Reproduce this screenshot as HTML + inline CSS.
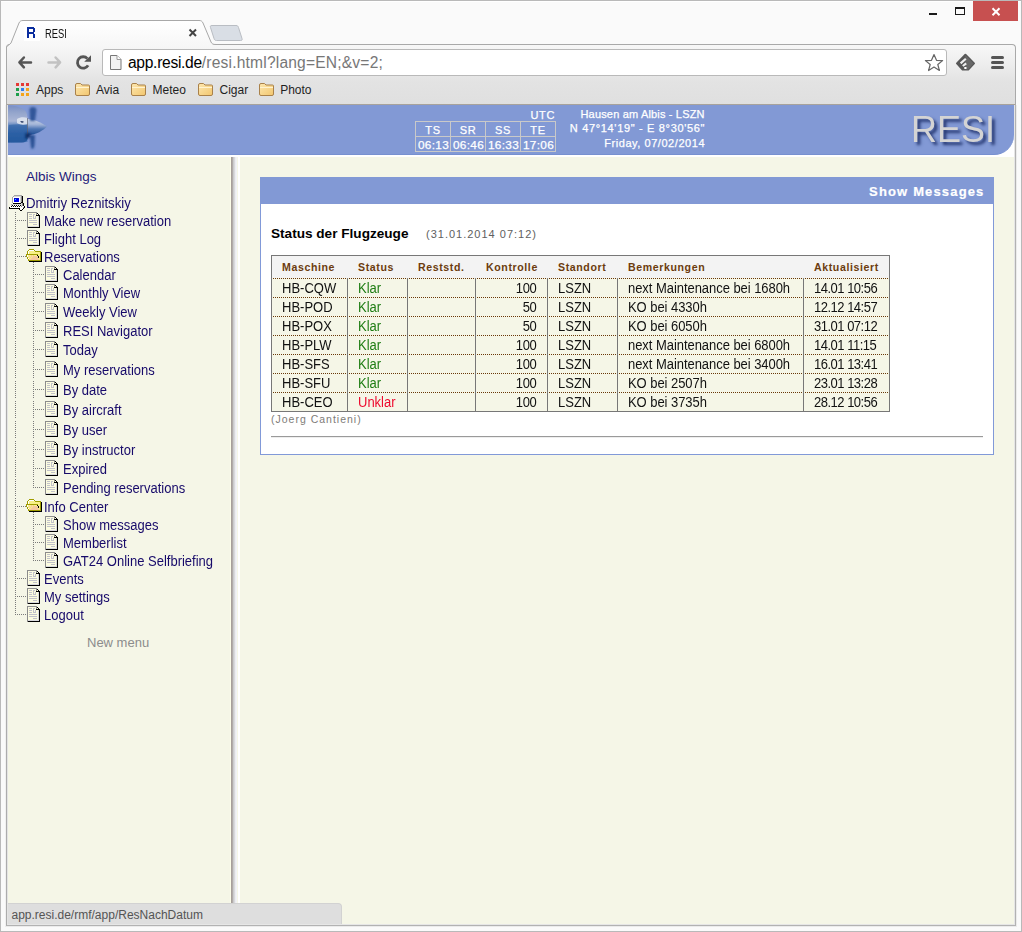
<!DOCTYPE html>
<html><head><meta charset="utf-8">
<style>
*{margin:0;padding:0;box-sizing:border-box}
html,body{width:1022px;height:932px;overflow:hidden;background:#f8f8f8;font-family:"Liberation Sans",sans-serif}
.a{position:absolute}
.t{position:absolute;white-space:nowrap;line-height:1}
.sy{transform:scaleY(1.07);transform-origin:0 11px}
</style></head><body>
<!-- window frame -->
<div class="a" style="left:0;top:0;width:1022px;height:932px;border:1px solid #b9b9b9;background:#fafafa"></div>
<div class="a" style="left:1px;top:1px;width:1020px;height:1px;background:#fff"></div>
<!-- window controls -->
<div class="a" style="left:929px;top:13px;width:8px;height:2px;background:#1a1a1a"></div>
<div class="a" style="left:955px;top:7px;width:10px;height:8px;border:1px solid #1a1a1a;border-top-width:2px"></div>
<div class="a" style="left:973px;top:1px;width:45px;height:20px;background:#c75050"></div>
<svg class="a" style="left:973px;top:1px" width="45" height="20"><path d="M19.5 7.3 L26.5 14.2 M26.5 7.3 L19.5 14.2" stroke="#fff" stroke-width="2"/></svg>

<!-- toolbar + bookmarks -->
<div class="a" style="left:6px;top:44px;width:1010px;height:61px;border:1px solid #a9a9a9;border-bottom:none;border-radius:4px 4px 0 0;background:linear-gradient(#f7f7f7 0px,#ededed 20px,#e3e3e3 36px,#dfdfdf 61px)"></div>

<!-- tab -->
<svg class="a" style="left:0;top:14px" width="260" height="34">
 <defs><linearGradient id="tg" x1="0" y1="0" x2="0" y2="1"><stop offset="0" stop-color="#ffffff"/><stop offset="1" stop-color="#f6f6f6"/></linearGradient></defs>
 <path d="M6.5 34 L6.5 33 C8 31 10 30.5 11 29 L19 9 C20 7 21 6.5 23 6.5 L199 6.5 C201 6.5 202 7 203 9 L211 28 C212 30 213 30.5 216 30.5 L260 30.5 L260 34 Z" fill="url(#tg)" stroke="none"/>
 <path d="M6.5 34 L6.5 33 C8 31 10 30.5 11 29 L19 9 C20 7 21 6.5 23 6.5 L199 6.5 C201 6.5 202 7 203 9 L211 28 C212 30 213 30.5 216 30.5 L260 30.5" fill="none" stroke="#a8a8a8" stroke-width="1"/>
 <path d="M212 11.5 L236 11.5 C237.5 11.5 238 12 238.5 13.5 L242 24.5 C242.5 26 242 26.5 240.5 26.5 L216.5 26.5 C215 26.5 214.5 26 214 24.5 L210.5 13.5 C210 12 210.5 11.5 212 11.5 Z" fill="#d9dee5" stroke="#b9bdc3" stroke-width="1"/>
</svg>
<div class="a" style="left:24px;top:25px;width:16px;height:16px;background:#fff"></div>
<svg class="a" style="left:27px;top:27px" width="9" height="11"><path d="M0 0 H7 V1 H8 V11 H6 V7 H2 V11 H0 Z M2 2 V5 H6 V2 Z" fill="#0a2d9e" fill-rule="evenodd"/><rect x="7" y="5" width="1" height="2" fill="#fff"/></svg>
<div class="t" style="left:44.5px;top:26.5px;font:12.5px 'Liberation Sans';color:#111;transform:scaleX(0.75);transform-origin:0 0">RESI</div>
<svg class="a" style="left:188px;top:28px" width="10" height="10"><path d="M1.5 1.5 L8 8 M8 1.5 L1.5 8" stroke="#444" stroke-width="2"/></svg>

<!-- nav icons -->
<svg class="a" style="left:16px;top:54px" width="20" height="17"><path d="M7.9 3.5 L3.4 8.4 L7.9 13.3 M4 8.4 L15 8.4" stroke="#555" stroke-width="2.5" fill="none" stroke-linecap="round" stroke-linejoin="round"/></svg>
<svg class="a" style="left:45px;top:54px" width="20" height="17"><path d="M10.6 3.5 L15.1 8.4 L10.6 13.3 M14.5 8.4 L3.5 8.4" stroke="#c2c2c2" stroke-width="2.5" fill="none" stroke-linecap="round" stroke-linejoin="round"/></svg>
<svg class="a" style="left:74px;top:53px" width="20" height="19"><path d="M14.1 12.35 A5.7 5.7 0 1 1 13.4 5.6" stroke="#555" stroke-width="2.8" fill="none"/><path d="M17 2.2 L17 8.8 L10.2 8.8 Z" fill="#555"/></svg>

<!-- omnibox -->
<div class="a" style="left:102px;top:49px;width:845px;height:27px;border:1px solid #b9b9b9;border-radius:3px;background:#fff"></div>
<svg class="a" style="left:109px;top:54px" width="14" height="17"><path d="M1.5 1.5 L8 1.5 L12 5.5 L12 15.5 L1.5 15.5 Z" fill="#f2f2f2" stroke="#777" stroke-width="1"/><path d="M8 1.5 L8 5.5 L12 5.5" fill="#fff" stroke="#999" stroke-width="1"/></svg>
<div class="t" style="left:128px;top:54px;font:15.6px 'Liberation Sans';color:#000;letter-spacing:-0.3px">app.resi.de<span style="color:#777;letter-spacing:0.18px">/resi.html?lang=EN;&amp;v=2;</span></div>
<svg class="a" style="left:922.5px;top:52px" width="22" height="22"><path d="M11 2.5 L13.5 8.3 L19.6 8.6 L14.8 12.5 L16.4 18.5 L11 15.1 L5.6 18.5 L7.2 12.5 L2.4 8.6 L8.5 8.3 Z" fill="#fff" stroke="#666" stroke-width="1.2" stroke-linejoin="round"/></svg>
<svg class="a" style="left:954px;top:52px" width="22" height="22"><path d="M11.4 2.8 L20 11.4 L14.2 17.5 L8.6 17.5 L3 11.4 Z" fill="#575757" stroke="#575757" stroke-width="2" stroke-linejoin="round"/><path d="M11.4 3 L19.5 11.4 L14 17.5 L11.4 17.5 Z" fill="#686868"/><path d="M6.6 11.4 L11.8 6.8 M8.8 14 L12.2 11.3" stroke="#eee" stroke-width="2.2" stroke-linecap="butt"/><rect x="10.3" y="15" width="2.2" height="2" fill="#fff"/></svg>
<div class="a" style="left:991px;top:56px;width:13px;height:3px;background:#555;border-radius:1.5px"></div>
<div class="a" style="left:991px;top:61px;width:13px;height:3px;background:#555;border-radius:1.5px"></div>
<div class="a" style="left:991px;top:66px;width:13px;height:3px;background:#555;border-radius:1.5px"></div>


<div class="a" style="left:16px;top:83px;width:3px;height:3px;background:#e53935"></div>
<div class="a" style="left:21px;top:83px;width:3px;height:3px;background:#e53935"></div>
<div class="a" style="left:26px;top:83px;width:3px;height:3px;background:#e53935"></div>
<div class="a" style="left:16px;top:88px;width:3px;height:3px;background:#1e9e4a"></div>
<div class="a" style="left:21px;top:88px;width:3px;height:3px;background:#2f7ff0"></div>
<div class="a" style="left:26px;top:88px;width:3px;height:3px;background:#f4a41a"></div>
<div class="a" style="left:16px;top:93px;width:3px;height:3px;background:#1e9e4a"></div>
<div class="a" style="left:21px;top:93px;width:3px;height:3px;background:#f4a41a"></div>
<div class="a" style="left:26px;top:93px;width:3px;height:3px;background:#f4a41a"></div>
<div class="t" style="left:36px;top:83.4px;font:12px 'Liberation Sans';color:#1f1f1f">Apps</div>
<svg class="a" style="left:75px;top:83px" width="16" height="13"><defs><linearGradient id="fg" x1="0" y1="0" x2="1" y2="1"><stop offset="0" stop-color="#fde7b0"/><stop offset="1" stop-color="#f2c66e"/></linearGradient></defs><path d="M0.5 2 Q0.5 0.5 2 0.5 L5.5 0.5 L7 2 L13.5 2 Q14.5 2 14.5 3 L14.5 11 Q14.5 12.5 13 12.5 L2 12.5 Q0.5 12.5 0.5 11 Z" fill="url(#fg)" stroke="#a9814a"/><path d="M1 4.5 L14 4.5" stroke="#fff3d0" stroke-width="1"/></svg>
<div class="t" style="left:96px;top:83.4px;font:12px 'Liberation Sans';color:#1f1f1f">Avia</div>
<svg class="a" style="left:131px;top:83px" width="16" height="13"><defs><linearGradient id="fg" x1="0" y1="0" x2="1" y2="1"><stop offset="0" stop-color="#fde7b0"/><stop offset="1" stop-color="#f2c66e"/></linearGradient></defs><path d="M0.5 2 Q0.5 0.5 2 0.5 L5.5 0.5 L7 2 L13.5 2 Q14.5 2 14.5 3 L14.5 11 Q14.5 12.5 13 12.5 L2 12.5 Q0.5 12.5 0.5 11 Z" fill="url(#fg)" stroke="#a9814a"/><path d="M1 4.5 L14 4.5" stroke="#fff3d0" stroke-width="1"/></svg>
<div class="t" style="left:152.6px;top:83.4px;font:12px 'Liberation Sans';color:#1f1f1f">Meteo</div>
<svg class="a" style="left:198px;top:83px" width="16" height="13"><defs><linearGradient id="fg" x1="0" y1="0" x2="1" y2="1"><stop offset="0" stop-color="#fde7b0"/><stop offset="1" stop-color="#f2c66e"/></linearGradient></defs><path d="M0.5 2 Q0.5 0.5 2 0.5 L5.5 0.5 L7 2 L13.5 2 Q14.5 2 14.5 3 L14.5 11 Q14.5 12.5 13 12.5 L2 12.5 Q0.5 12.5 0.5 11 Z" fill="url(#fg)" stroke="#a9814a"/><path d="M1 4.5 L14 4.5" stroke="#fff3d0" stroke-width="1"/></svg>
<div class="t" style="left:219.5px;top:83.4px;font:12px 'Liberation Sans';color:#1f1f1f">Cigar</div>
<svg class="a" style="left:259px;top:83px" width="16" height="13"><defs><linearGradient id="fg" x1="0" y1="0" x2="1" y2="1"><stop offset="0" stop-color="#fde7b0"/><stop offset="1" stop-color="#f2c66e"/></linearGradient></defs><path d="M0.5 2 Q0.5 0.5 2 0.5 L5.5 0.5 L7 2 L13.5 2 Q14.5 2 14.5 3 L14.5 11 Q14.5 12.5 13 12.5 L2 12.5 Q0.5 12.5 0.5 11 Z" fill="url(#fg)" stroke="#a9814a"/><path d="M1 4.5 L14 4.5" stroke="#fff3d0" stroke-width="1"/></svg>
<div class="t" style="left:280.2px;top:83.4px;font:12px 'Liberation Sans';color:#1f1f1f">Photo</div>
<div class="a" style="left:6px;top:104px;width:1010px;height:822px;border:1px solid #b2b2b2;border-left-color:#acacac;border-top-color:#a7a29c;background:#f5f6e7"></div>
<div class="a" style="left:7px;top:105px;width:1px;height:820px;background:#e4e4e4"></div>
<div class="a" style="left:1014px;top:105px;width:1px;height:820px;background:#e6e6e6"></div>
<div class="a" style="left:7px;top:924px;width:1008px;height:1px;background:#e6e6e6"></div>
<div class="a" style="left:1016px;top:105px;width:1px;height:822px;background:#ebebeb"></div>
<div class="a" style="left:5px;top:105px;width:1px;height:822px;background:#f0f0f0"></div>
<div class="a" style="left:5px;top:926px;width:1012px;height:1px;background:#ebebeb"></div>
<div class="a" style="left:8px;top:105px;width:1006px;height:52px;background:#fff"></div>
<div class="a" style="left:8px;top:105px;width:1006px;height:50px;background:#8299d5;border-bottom:1px solid #7790d0;border-bottom-right-radius:20px"></div>
<svg class="a" style="left:8px;top:105px" width="45" height="48">
<defs>
<linearGradient id="fus" x1="0" y1="0" x2="0" y2="1"><stop offset="0" stop-color="#7a8fc4"/><stop offset="0.2" stop-color="#95a6cc"/><stop offset="0.42" stop-color="#aab6d6"/><stop offset="0.55" stop-color="#5a82bc"/><stop offset="0.75" stop-color="#2d62a6"/><stop offset="1" stop-color="#1f5298"/></linearGradient>
<linearGradient id="spn" x1="0" y1="0" x2="0" y2="1"><stop offset="0" stop-color="#d0d8e8"/><stop offset="0.35" stop-color="#9fb2d6"/><stop offset="0.6" stop-color="#4f76b4"/><stop offset="1" stop-color="#1d4a90"/></linearGradient>
<filter id="bl" x="-50%" y="-20%" width="200%" height="140%"><feGaussianBlur stdDeviation="0.8"/></filter>
<filter id="bl2"><feGaussianBlur stdDeviation="0.45"/></filter>
</defs>
<g filter="url(#bl2)">
<path d="M0 0.5 C8 0.5 14 2.5 17.5 6 C19 8 19.5 12 19.5 14 L19.5 34 C19 36 17 37.5 14 37.5 L0 37.5 Z" fill="url(#fus)"/>
<path d="M1 20 C6 19 12 19 19 19.5 L19.5 37 L0 37.5 Z" fill="#2a5ea4" opacity="0.55"/>
<path d="M19 14 C25 13.5 32 17 39 21.5 C35 25.5 29 29.5 19 30.5 Z" fill="url(#spn)"/>
<path d="M9 14 C12 12 16 12 20 13 L20 19 C16 20 12 20 9 18 Z" fill="#dfe4ee" opacity="0.9"/>
<path d="M12 16.5 C13 15.5 15 16 16 17 L14 18 Z" fill="#3a4a70"/>
<path d="M19 13 L20 13 L20 31 L19 31 Z" fill="#5a6070" opacity="0.7"/>
</g>
<g filter="url(#bl)">
<path d="M21.5 4 C23 1 28.5 1.5 28.5 5 L27 16 L22 16 Z" fill="#33579a"/>
<path d="M21.5 30 L27 30 L26.5 40 C26 44.5 23.5 45 23 42 Z" fill="#2b5194"/>
<path d="M17.5 28 L23 29 L21 33 L17.5 34 Z" fill="#0c2a64"/>
</g>
</svg>
<div class="t" style="left:911px;top:109px;font:36px 'Liberation Sans';color:#d4d4d4;text-shadow:3px 3px 3px #23356f;transform:scaleY(1.05);transform-origin:0 30px">RESI</div>
<div class="t" style="right:317.33px;top:108px;font:11px 'Liberation Sans';letter-spacing:0.17px;color:#fff;-webkit-text-stroke:0.25px #fff;text-align:right">Hausen am Albis - LSZN</div>
<div class="t" style="right:316.83px;top:122px;font:11px 'Liberation Sans';letter-spacing:0.67px;color:#fff;-webkit-text-stroke:0.25px #fff;text-align:right">N 47°14'19&quot; - E 8°30'56&quot;</div>
<div class="t" style="right:316.95px;top:136.5px;font:11px 'Liberation Sans';letter-spacing:0.55px;color:#fff;-webkit-text-stroke:0.25px #fff;text-align:right">Friday, 07/02/2014</div>
<div class="t" style="right:467px;top:108.5px;font:11px 'Liberation Sans';letter-spacing:0.6px;color:#fff;-webkit-text-stroke:0.25px #fff">UTC</div>
<div class="a" style="left:415px;top:121px;width:141px;height:31px;border:1px solid #c9c9c9"></div>
<div class="a" style="left:415px;top:136px;width:141px;height:1px;background:#c9c9c9"></div>
<div class="a" style="left:450px;top:121px;width:1px;height:31px;background:#c9c9c9"></div>
<div class="a" style="left:485px;top:121px;width:1px;height:31px;background:#c9c9c9"></div>
<div class="a" style="left:520px;top:121px;width:1px;height:31px;background:#c9c9c9"></div>
<div class="t" style="left:416px;width:34px;text-align:center;top:123.5px;font:11px 'Liberation Sans';letter-spacing:0.6px;color:#fff;-webkit-text-stroke:0.25px #fff">TS</div>
<div class="t" style="left:416px;width:35px;text-align:center;top:137.5px;font:11.8px 'Liberation Sans';letter-spacing:0.3px;color:#fff;-webkit-text-stroke:0.25px #fff">06:13</div>
<div class="t" style="left:451px;width:34px;text-align:center;top:123.5px;font:11px 'Liberation Sans';letter-spacing:0.6px;color:#fff;-webkit-text-stroke:0.25px #fff">SR</div>
<div class="t" style="left:451px;width:35px;text-align:center;top:137.5px;font:11.8px 'Liberation Sans';letter-spacing:0.3px;color:#fff;-webkit-text-stroke:0.25px #fff">06:46</div>
<div class="t" style="left:486px;width:34px;text-align:center;top:123.5px;font:11px 'Liberation Sans';letter-spacing:0.6px;color:#fff;-webkit-text-stroke:0.25px #fff">SS</div>
<div class="t" style="left:486px;width:35px;text-align:center;top:137.5px;font:11.8px 'Liberation Sans';letter-spacing:0.3px;color:#fff;-webkit-text-stroke:0.25px #fff">16:33</div>
<div class="t" style="left:521px;width:34px;text-align:center;top:123.5px;font:11px 'Liberation Sans';letter-spacing:0.6px;color:#fff;-webkit-text-stroke:0.25px #fff">TE</div>
<div class="t" style="left:521px;width:35px;text-align:center;top:137.5px;font:11.8px 'Liberation Sans';letter-spacing:0.3px;color:#fff;-webkit-text-stroke:0.25px #fff">17:06</div>
<div class="a" style="left:230px;top:157px;width:1px;height:746px;background:#fcfde9"></div>
<div class="a" style="left:231px;top:157px;width:1px;height:746px;background:#a79f9b"></div>
<div class="a" style="left:232px;top:157px;width:1px;height:746px;background:#b1aca9"></div>
<div class="a" style="left:233px;top:157px;width:1px;height:746px;background:#cbcbcd"></div>
<div class="a" style="left:234px;top:157px;width:1px;height:746px;background:#d9d9dc"></div>
<div class="a" style="left:235px;top:157px;width:1px;height:746px;background:#ecedf0"></div>
<div class="a" style="left:236px;top:157px;width:1px;height:746px;background:#f2f3f6"></div>
<div class="a" style="left:238px;top:157px;width:1px;height:746px;background:#ffffff"></div>
<div class="a" style="left:239px;top:157px;width:1px;height:746px;background:#ffffff"></div>
<div class="t" style="left:26px;top:168.5px;font:13.5px 'Liberation Sans';color:#1f1a7a">Albis Wings</div>
<svg class="a" style="left:8px;top:194px" width="18" height="18" shape-rendering="crispEdges"><rect x="6" y="1" width="8" height="1" fill="#a4a4a4"/><rect x="5" y="2" width="1" height="1" fill="#a4a4a4"/><rect x="6" y="2" width="7" height="1" fill="#d6d6d6"/><rect x="13" y="2" width="1" height="1" fill="#8c8c8c"/><rect x="14" y="2" width="1" height="1" fill="#000000"/><rect x="4" y="3" width="1" height="1" fill="#a4a4a4"/><rect x="5" y="3" width="7" height="1" fill="#ffffff"/><rect x="12" y="3" width="1" height="1" fill="#d6d6d6"/><rect x="13" y="3" width="1" height="1" fill="#8c8c8c"/><rect x="14" y="3" width="1" height="1" fill="#000000"/><rect x="4" y="4" width="1" height="1" fill="#a4a4a4"/><rect x="5" y="4" width="1" height="1" fill="#ffffff"/><rect x="6" y="4" width="5" height="1" fill="#0808c0"/><rect x="11" y="4" width="1" height="1" fill="#ffffff"/><rect x="12" y="4" width="1" height="1" fill="#d6d6d6"/><rect x="13" y="4" width="1" height="1" fill="#8c8c8c"/><rect x="14" y="4" width="1" height="1" fill="#000000"/><rect x="4" y="5" width="1" height="1" fill="#a4a4a4"/><rect x="5" y="5" width="1" height="1" fill="#ffffff"/><rect x="6" y="5" width="1" height="1" fill="#0000f4"/><rect x="7" y="5" width="1" height="1" fill="#10e8ff"/><rect x="8" y="5" width="3" height="1" fill="#0000f4"/><rect x="11" y="5" width="1" height="1" fill="#ffffff"/><rect x="12" y="5" width="1" height="1" fill="#d6d6d6"/><rect x="13" y="5" width="1" height="1" fill="#8c8c8c"/><rect x="14" y="5" width="1" height="1" fill="#000000"/><rect x="4" y="6" width="1" height="1" fill="#a4a4a4"/><rect x="5" y="6" width="1" height="1" fill="#ffffff"/><rect x="6" y="6" width="5" height="1" fill="#0000f4"/><rect x="11" y="6" width="1" height="1" fill="#ffffff"/><rect x="12" y="6" width="1" height="1" fill="#d6d6d6"/><rect x="13" y="6" width="1" height="1" fill="#8c8c8c"/><rect x="14" y="6" width="1" height="1" fill="#000000"/><rect x="4" y="7" width="1" height="1" fill="#a4a4a4"/><rect x="5" y="7" width="1" height="1" fill="#ffffff"/><rect x="6" y="7" width="5" height="1" fill="#0000f4"/><rect x="11" y="7" width="1" height="1" fill="#ffffff"/><rect x="12" y="7" width="1" height="1" fill="#d6d6d6"/><rect x="13" y="7" width="1" height="1" fill="#8c8c8c"/><rect x="14" y="7" width="1" height="1" fill="#000000"/><rect x="4" y="8" width="1" height="1" fill="#a4a4a4"/><rect x="5" y="8" width="7" height="1" fill="#ffffff"/><rect x="12" y="8" width="1" height="1" fill="#d6d6d6"/><rect x="13" y="8" width="2" height="1" fill="#000000"/><rect x="5" y="9" width="8" height="1" fill="#000000"/><rect x="13" y="9" width="1" height="1" fill="#d6d6d6"/><rect x="14" y="9" width="1" height="1" fill="#8c8c8c"/><rect x="15" y="9" width="1" height="1" fill="#000000"/><rect x="3" y="10" width="1" height="1" fill="#a4a4a4"/><rect x="4" y="10" width="10" height="1" fill="#d6d6d6"/><rect x="14" y="10" width="1" height="1" fill="#8c8c8c"/><rect x="15" y="10" width="1" height="1" fill="#000000"/><rect x="3" y="11" width="1" height="1" fill="#d6d6d6"/><rect x="4" y="11" width="1" height="1" fill="#000000"/><rect x="5" y="11" width="1" height="1" fill="#ffffff"/><rect x="6" y="11" width="1" height="1" fill="#000000"/><rect x="7" y="11" width="1" height="1" fill="#ffffff"/><rect x="8" y="11" width="1" height="1" fill="#000000"/><rect x="9" y="11" width="1" height="1" fill="#ffffff"/><rect x="10" y="11" width="1" height="1" fill="#000000"/><rect x="11" y="11" width="1" height="1" fill="#ffffff"/><rect x="12" y="11" width="1" height="1" fill="#000000"/><rect x="13" y="11" width="1" height="1" fill="#d6d6d6"/><rect x="14" y="11" width="1" height="1" fill="#8c8c8c"/><rect x="15" y="11" width="1" height="1" fill="#000000"/><rect x="2" y="12" width="1" height="1" fill="#ffffff"/><rect x="3" y="12" width="1" height="1" fill="#000000"/><rect x="4" y="12" width="1" height="1" fill="#ffffff"/><rect x="5" y="12" width="1" height="1" fill="#000000"/><rect x="6" y="12" width="1" height="1" fill="#ffffff"/><rect x="7" y="12" width="1" height="1" fill="#000000"/><rect x="8" y="12" width="1" height="1" fill="#ffffff"/><rect x="9" y="12" width="1" height="1" fill="#000000"/><rect x="10" y="12" width="1" height="1" fill="#ffffff"/><rect x="11" y="12" width="1" height="1" fill="#000000"/><rect x="12" y="12" width="1" height="1" fill="#ffffff"/><rect x="13" y="12" width="1" height="1" fill="#8c8c8c"/><rect x="14" y="12" width="2" height="1" fill="#ffffff"/><rect x="16" y="12" width="1" height="1" fill="#000000"/><rect x="1" y="13" width="1" height="1" fill="#000000"/><rect x="2" y="13" width="13" height="1" fill="#ffffff"/><rect x="15" y="13" width="1" height="1" fill="#8c8c8c"/><rect x="16" y="13" width="1" height="1" fill="#000000"/><rect x="1" y="14" width="11" height="1" fill="#000000"/><rect x="12" y="14" width="3" height="1" fill="#ffffff"/><rect x="15" y="14" width="1" height="1" fill="#000000"/><rect x="11" y="15" width="1" height="1" fill="#000000"/><rect x="12" y="15" width="2" height="1" fill="#ffffff"/><rect x="14" y="15" width="1" height="1" fill="#000000"/><rect x="12" y="16" width="2" height="1" fill="#000000"/></svg>
<div class="t sy" style="left:26px;top:196px;font:13.2px 'Liberation Sans';color:#170a6a">Dmitriy Reznitskiy</div>
<div class="a" style="left:15px;top:212px;width:1px;height:18px;background:repeating-linear-gradient(#7a7a7a 0 1px,transparent 1px 2px)"></div>
<div class="a" style="left:15px;top:230px;width:1px;height:18px;background:repeating-linear-gradient(#7a7a7a 0 1px,transparent 1px 2px)"></div>
<div class="a" style="left:15px;top:248px;width:1px;height:18px;background:repeating-linear-gradient(#7a7a7a 0 1px,transparent 1px 2px)"></div>
<div class="a" style="left:33px;top:262px;width:1px;height:4px;background:repeating-linear-gradient(#7a7a7a 0 1px,transparent 1px 2px)"></div>
<div class="a" style="left:15px;top:266px;width:1px;height:18px;background:repeating-linear-gradient(#7a7a7a 0 1px,transparent 1px 2px)"></div>
<div class="a" style="left:33px;top:266px;width:1px;height:18px;background:repeating-linear-gradient(#7a7a7a 0 1px,transparent 1px 2px)"></div>
<div class="a" style="left:15px;top:284px;width:1px;height:18px;background:repeating-linear-gradient(#7a7a7a 0 1px,transparent 1px 2px)"></div>
<div class="a" style="left:33px;top:284px;width:1px;height:18px;background:repeating-linear-gradient(#7a7a7a 0 1px,transparent 1px 2px)"></div>
<div class="a" style="left:15px;top:303px;width:1px;height:18px;background:repeating-linear-gradient(#7a7a7a 0 1px,transparent 1px 2px)"></div>
<div class="a" style="left:33px;top:303px;width:1px;height:18px;background:repeating-linear-gradient(#7a7a7a 0 1px,transparent 1px 2px)"></div>
<div class="a" style="left:15px;top:322px;width:1px;height:18px;background:repeating-linear-gradient(#7a7a7a 0 1px,transparent 1px 2px)"></div>
<div class="a" style="left:33px;top:322px;width:1px;height:18px;background:repeating-linear-gradient(#7a7a7a 0 1px,transparent 1px 2px)"></div>
<div class="a" style="left:15px;top:341px;width:1px;height:18px;background:repeating-linear-gradient(#7a7a7a 0 1px,transparent 1px 2px)"></div>
<div class="a" style="left:33px;top:341px;width:1px;height:18px;background:repeating-linear-gradient(#7a7a7a 0 1px,transparent 1px 2px)"></div>
<div class="a" style="left:15px;top:361px;width:1px;height:18px;background:repeating-linear-gradient(#7a7a7a 0 1px,transparent 1px 2px)"></div>
<div class="a" style="left:33px;top:361px;width:1px;height:18px;background:repeating-linear-gradient(#7a7a7a 0 1px,transparent 1px 2px)"></div>
<div class="a" style="left:15px;top:381px;width:1px;height:18px;background:repeating-linear-gradient(#7a7a7a 0 1px,transparent 1px 2px)"></div>
<div class="a" style="left:33px;top:381px;width:1px;height:18px;background:repeating-linear-gradient(#7a7a7a 0 1px,transparent 1px 2px)"></div>
<div class="a" style="left:15px;top:401px;width:1px;height:18px;background:repeating-linear-gradient(#7a7a7a 0 1px,transparent 1px 2px)"></div>
<div class="a" style="left:33px;top:401px;width:1px;height:18px;background:repeating-linear-gradient(#7a7a7a 0 1px,transparent 1px 2px)"></div>
<div class="a" style="left:15px;top:421px;width:1px;height:18px;background:repeating-linear-gradient(#7a7a7a 0 1px,transparent 1px 2px)"></div>
<div class="a" style="left:33px;top:421px;width:1px;height:18px;background:repeating-linear-gradient(#7a7a7a 0 1px,transparent 1px 2px)"></div>
<div class="a" style="left:15px;top:441px;width:1px;height:18px;background:repeating-linear-gradient(#7a7a7a 0 1px,transparent 1px 2px)"></div>
<div class="a" style="left:33px;top:441px;width:1px;height:18px;background:repeating-linear-gradient(#7a7a7a 0 1px,transparent 1px 2px)"></div>
<div class="a" style="left:15px;top:460px;width:1px;height:18px;background:repeating-linear-gradient(#7a7a7a 0 1px,transparent 1px 2px)"></div>
<div class="a" style="left:33px;top:460px;width:1px;height:18px;background:repeating-linear-gradient(#7a7a7a 0 1px,transparent 1px 2px)"></div>
<div class="a" style="left:15px;top:479px;width:1px;height:18px;background:repeating-linear-gradient(#7a7a7a 0 1px,transparent 1px 2px)"></div>
<div class="a" style="left:33px;top:479px;width:1px;height:9px;background:repeating-linear-gradient(#7a7a7a 0 1px,transparent 1px 2px)"></div>
<div class="a" style="left:15px;top:498px;width:1px;height:18px;background:repeating-linear-gradient(#7a7a7a 0 1px,transparent 1px 2px)"></div>
<div class="a" style="left:33px;top:512px;width:1px;height:4px;background:repeating-linear-gradient(#7a7a7a 0 1px,transparent 1px 2px)"></div>
<div class="a" style="left:15px;top:516px;width:1px;height:18px;background:repeating-linear-gradient(#7a7a7a 0 1px,transparent 1px 2px)"></div>
<div class="a" style="left:33px;top:516px;width:1px;height:18px;background:repeating-linear-gradient(#7a7a7a 0 1px,transparent 1px 2px)"></div>
<div class="a" style="left:15px;top:534px;width:1px;height:18px;background:repeating-linear-gradient(#7a7a7a 0 1px,transparent 1px 2px)"></div>
<div class="a" style="left:33px;top:534px;width:1px;height:18px;background:repeating-linear-gradient(#7a7a7a 0 1px,transparent 1px 2px)"></div>
<div class="a" style="left:15px;top:552px;width:1px;height:18px;background:repeating-linear-gradient(#7a7a7a 0 1px,transparent 1px 2px)"></div>
<div class="a" style="left:33px;top:552px;width:1px;height:9px;background:repeating-linear-gradient(#7a7a7a 0 1px,transparent 1px 2px)"></div>
<div class="a" style="left:15px;top:570px;width:1px;height:18px;background:repeating-linear-gradient(#7a7a7a 0 1px,transparent 1px 2px)"></div>
<div class="a" style="left:15px;top:588px;width:1px;height:18px;background:repeating-linear-gradient(#7a7a7a 0 1px,transparent 1px 2px)"></div>
<div class="a" style="left:15px;top:606px;width:1px;height:9px;background:repeating-linear-gradient(#7a7a7a 0 1px,transparent 1px 2px)"></div>
<div class="a" style="left:15px;top:220px;width:12px;height:1px;background:repeating-linear-gradient(90deg,#7a7a7a 0 1px,transparent 1px 2px)"></div>
<svg class="a" style="left:27px;top:212px" width="13" height="16" shape-rendering="crispEdges"><rect x="0" y="0" width="10" height="1" fill="#8c8c8c"/><rect x="0" y="1" width="1" height="1" fill="#8c8c8c"/><rect x="1" y="1" width="8" height="1" fill="#fcfce0"/><rect x="9" y="1" width="1" height="1" fill="#8c8c8c"/><rect x="10" y="1" width="1" height="1" fill="#000000"/><rect x="0" y="2" width="1" height="1" fill="#8c8c8c"/><rect x="1" y="2" width="1" height="1" fill="#fcfce0"/><rect x="2" y="2" width="3" height="1" fill="#c2c2ca"/><rect x="5" y="2" width="1" height="1" fill="#fcfce0"/><rect x="6" y="2" width="2" height="1" fill="#c2c2ca"/><rect x="8" y="2" width="1" height="1" fill="#fcfce0"/><rect x="9" y="2" width="1" height="1" fill="#8c8c8c"/><rect x="10" y="2" width="1" height="1" fill="#fcfce0"/><rect x="11" y="2" width="1" height="1" fill="#000000"/><rect x="0" y="3" width="1" height="1" fill="#8c8c8c"/><rect x="1" y="3" width="5" height="1" fill="#fcfce0"/><rect x="6" y="3" width="1" height="1" fill="#c2c2ca"/><rect x="7" y="3" width="2" height="1" fill="#fcfce0"/><rect x="9" y="3" width="4" height="1" fill="#000000"/><rect x="0" y="4" width="1" height="1" fill="#8c8c8c"/><rect x="1" y="4" width="1" height="1" fill="#fcfce0"/><rect x="2" y="4" width="3" height="1" fill="#c2c2ca"/><rect x="5" y="4" width="1" height="1" fill="#fcfce0"/><rect x="6" y="4" width="1" height="1" fill="#c2c2ca"/><rect x="7" y="4" width="1" height="1" fill="#fcfce0"/><rect x="8" y="4" width="1" height="1" fill="#c2c2ca"/><rect x="9" y="4" width="2" height="1" fill="#fcfce0"/><rect x="11" y="4" width="1" height="1" fill="#d9d9de"/><rect x="12" y="4" width="1" height="1" fill="#000000"/><rect x="0" y="5" width="1" height="1" fill="#8c8c8c"/><rect x="1" y="5" width="5" height="1" fill="#fcfce0"/><rect x="6" y="5" width="1" height="1" fill="#c2c2ca"/><rect x="7" y="5" width="1" height="1" fill="#fcfce0"/><rect x="8" y="5" width="1" height="1" fill="#c2c2ca"/><rect x="9" y="5" width="2" height="1" fill="#fcfce0"/><rect x="11" y="5" width="1" height="1" fill="#d9d9de"/><rect x="12" y="5" width="1" height="1" fill="#000000"/><rect x="0" y="6" width="1" height="1" fill="#8c8c8c"/><rect x="1" y="6" width="1" height="1" fill="#fcfce0"/><rect x="2" y="6" width="3" height="1" fill="#c2c2ca"/><rect x="5" y="6" width="1" height="1" fill="#fcfce0"/><rect x="6" y="6" width="3" height="1" fill="#c2c2ca"/><rect x="9" y="6" width="2" height="1" fill="#fcfce0"/><rect x="11" y="6" width="1" height="1" fill="#d9d9de"/><rect x="12" y="6" width="1" height="1" fill="#000000"/><rect x="0" y="7" width="1" height="1" fill="#8c8c8c"/><rect x="1" y="7" width="10" height="1" fill="#fcfce0"/><rect x="11" y="7" width="1" height="1" fill="#d9d9de"/><rect x="12" y="7" width="1" height="1" fill="#000000"/><rect x="0" y="8" width="1" height="1" fill="#8c8c8c"/><rect x="1" y="8" width="1" height="1" fill="#fcfce0"/><rect x="2" y="8" width="8" height="1" fill="#c2c2ca"/><rect x="10" y="8" width="1" height="1" fill="#fcfce0"/><rect x="11" y="8" width="1" height="1" fill="#d9d9de"/><rect x="12" y="8" width="1" height="1" fill="#000000"/><rect x="0" y="9" width="1" height="1" fill="#8c8c8c"/><rect x="1" y="9" width="10" height="1" fill="#fcfce0"/><rect x="11" y="9" width="1" height="1" fill="#d9d9de"/><rect x="12" y="9" width="1" height="1" fill="#000000"/><rect x="0" y="10" width="1" height="1" fill="#8c8c8c"/><rect x="1" y="10" width="1" height="1" fill="#fcfce0"/><rect x="2" y="10" width="8" height="1" fill="#c2c2ca"/><rect x="10" y="10" width="1" height="1" fill="#fcfce0"/><rect x="11" y="10" width="1" height="1" fill="#d9d9de"/><rect x="12" y="10" width="1" height="1" fill="#000000"/><rect x="0" y="11" width="1" height="1" fill="#8c8c8c"/><rect x="1" y="11" width="10" height="1" fill="#fcfce0"/><rect x="11" y="11" width="1" height="1" fill="#d9d9de"/><rect x="12" y="11" width="1" height="1" fill="#000000"/><rect x="0" y="12" width="1" height="1" fill="#8c8c8c"/><rect x="1" y="12" width="5" height="1" fill="#fcfce0"/><rect x="6" y="12" width="4" height="1" fill="#c2c2ca"/><rect x="10" y="12" width="1" height="1" fill="#fcfce0"/><rect x="11" y="12" width="1" height="1" fill="#d9d9de"/><rect x="12" y="12" width="1" height="1" fill="#000000"/><rect x="0" y="13" width="1" height="1" fill="#8c8c8c"/><rect x="1" y="13" width="10" height="1" fill="#fcfce0"/><rect x="11" y="13" width="1" height="1" fill="#d9d9de"/><rect x="12" y="13" width="1" height="1" fill="#000000"/><rect x="0" y="14" width="1" height="1" fill="#8c8c8c"/><rect x="1" y="14" width="11" height="1" fill="#d9d9de"/><rect x="12" y="14" width="1" height="1" fill="#000000"/><rect x="0" y="15" width="1" height="1" fill="#8c8c8c"/><rect x="1" y="15" width="12" height="1" fill="#000000"/></svg>
<div class="t sy" style="left:44px;top:214px;font:13px 'Liberation Sans';color:#170a6a">Make new reservation</div>
<div class="a" style="left:15px;top:238px;width:12px;height:1px;background:repeating-linear-gradient(90deg,#7a7a7a 0 1px,transparent 1px 2px)"></div>
<svg class="a" style="left:27px;top:230px" width="13" height="16" shape-rendering="crispEdges"><rect x="0" y="0" width="10" height="1" fill="#8c8c8c"/><rect x="0" y="1" width="1" height="1" fill="#8c8c8c"/><rect x="1" y="1" width="8" height="1" fill="#fcfce0"/><rect x="9" y="1" width="1" height="1" fill="#8c8c8c"/><rect x="10" y="1" width="1" height="1" fill="#000000"/><rect x="0" y="2" width="1" height="1" fill="#8c8c8c"/><rect x="1" y="2" width="1" height="1" fill="#fcfce0"/><rect x="2" y="2" width="3" height="1" fill="#c2c2ca"/><rect x="5" y="2" width="1" height="1" fill="#fcfce0"/><rect x="6" y="2" width="2" height="1" fill="#c2c2ca"/><rect x="8" y="2" width="1" height="1" fill="#fcfce0"/><rect x="9" y="2" width="1" height="1" fill="#8c8c8c"/><rect x="10" y="2" width="1" height="1" fill="#fcfce0"/><rect x="11" y="2" width="1" height="1" fill="#000000"/><rect x="0" y="3" width="1" height="1" fill="#8c8c8c"/><rect x="1" y="3" width="5" height="1" fill="#fcfce0"/><rect x="6" y="3" width="1" height="1" fill="#c2c2ca"/><rect x="7" y="3" width="2" height="1" fill="#fcfce0"/><rect x="9" y="3" width="4" height="1" fill="#000000"/><rect x="0" y="4" width="1" height="1" fill="#8c8c8c"/><rect x="1" y="4" width="1" height="1" fill="#fcfce0"/><rect x="2" y="4" width="3" height="1" fill="#c2c2ca"/><rect x="5" y="4" width="1" height="1" fill="#fcfce0"/><rect x="6" y="4" width="1" height="1" fill="#c2c2ca"/><rect x="7" y="4" width="1" height="1" fill="#fcfce0"/><rect x="8" y="4" width="1" height="1" fill="#c2c2ca"/><rect x="9" y="4" width="2" height="1" fill="#fcfce0"/><rect x="11" y="4" width="1" height="1" fill="#d9d9de"/><rect x="12" y="4" width="1" height="1" fill="#000000"/><rect x="0" y="5" width="1" height="1" fill="#8c8c8c"/><rect x="1" y="5" width="5" height="1" fill="#fcfce0"/><rect x="6" y="5" width="1" height="1" fill="#c2c2ca"/><rect x="7" y="5" width="1" height="1" fill="#fcfce0"/><rect x="8" y="5" width="1" height="1" fill="#c2c2ca"/><rect x="9" y="5" width="2" height="1" fill="#fcfce0"/><rect x="11" y="5" width="1" height="1" fill="#d9d9de"/><rect x="12" y="5" width="1" height="1" fill="#000000"/><rect x="0" y="6" width="1" height="1" fill="#8c8c8c"/><rect x="1" y="6" width="1" height="1" fill="#fcfce0"/><rect x="2" y="6" width="3" height="1" fill="#c2c2ca"/><rect x="5" y="6" width="1" height="1" fill="#fcfce0"/><rect x="6" y="6" width="3" height="1" fill="#c2c2ca"/><rect x="9" y="6" width="2" height="1" fill="#fcfce0"/><rect x="11" y="6" width="1" height="1" fill="#d9d9de"/><rect x="12" y="6" width="1" height="1" fill="#000000"/><rect x="0" y="7" width="1" height="1" fill="#8c8c8c"/><rect x="1" y="7" width="10" height="1" fill="#fcfce0"/><rect x="11" y="7" width="1" height="1" fill="#d9d9de"/><rect x="12" y="7" width="1" height="1" fill="#000000"/><rect x="0" y="8" width="1" height="1" fill="#8c8c8c"/><rect x="1" y="8" width="1" height="1" fill="#fcfce0"/><rect x="2" y="8" width="8" height="1" fill="#c2c2ca"/><rect x="10" y="8" width="1" height="1" fill="#fcfce0"/><rect x="11" y="8" width="1" height="1" fill="#d9d9de"/><rect x="12" y="8" width="1" height="1" fill="#000000"/><rect x="0" y="9" width="1" height="1" fill="#8c8c8c"/><rect x="1" y="9" width="10" height="1" fill="#fcfce0"/><rect x="11" y="9" width="1" height="1" fill="#d9d9de"/><rect x="12" y="9" width="1" height="1" fill="#000000"/><rect x="0" y="10" width="1" height="1" fill="#8c8c8c"/><rect x="1" y="10" width="1" height="1" fill="#fcfce0"/><rect x="2" y="10" width="8" height="1" fill="#c2c2ca"/><rect x="10" y="10" width="1" height="1" fill="#fcfce0"/><rect x="11" y="10" width="1" height="1" fill="#d9d9de"/><rect x="12" y="10" width="1" height="1" fill="#000000"/><rect x="0" y="11" width="1" height="1" fill="#8c8c8c"/><rect x="1" y="11" width="10" height="1" fill="#fcfce0"/><rect x="11" y="11" width="1" height="1" fill="#d9d9de"/><rect x="12" y="11" width="1" height="1" fill="#000000"/><rect x="0" y="12" width="1" height="1" fill="#8c8c8c"/><rect x="1" y="12" width="5" height="1" fill="#fcfce0"/><rect x="6" y="12" width="4" height="1" fill="#c2c2ca"/><rect x="10" y="12" width="1" height="1" fill="#fcfce0"/><rect x="11" y="12" width="1" height="1" fill="#d9d9de"/><rect x="12" y="12" width="1" height="1" fill="#000000"/><rect x="0" y="13" width="1" height="1" fill="#8c8c8c"/><rect x="1" y="13" width="10" height="1" fill="#fcfce0"/><rect x="11" y="13" width="1" height="1" fill="#d9d9de"/><rect x="12" y="13" width="1" height="1" fill="#000000"/><rect x="0" y="14" width="1" height="1" fill="#8c8c8c"/><rect x="1" y="14" width="11" height="1" fill="#d9d9de"/><rect x="12" y="14" width="1" height="1" fill="#000000"/><rect x="0" y="15" width="1" height="1" fill="#8c8c8c"/><rect x="1" y="15" width="12" height="1" fill="#000000"/></svg>
<div class="t sy" style="left:44px;top:232px;font:13px 'Liberation Sans';color:#170a6a">Flight Log</div>
<div class="a" style="left:15px;top:256px;width:11px;height:1px;background:repeating-linear-gradient(90deg,#7a7a7a 0 1px,transparent 1px 2px)"></div>
<svg class="a" style="left:25px;top:249px" width="17" height="13" shape-rendering="crispEdges"><rect x="4" y="0" width="5" height="1" fill="#a09c00"/><rect x="3" y="1" width="1" height="1" fill="#a09c00"/><rect x="4" y="1" width="5" height="1" fill="#ffffff"/><rect x="9" y="1" width="1" height="1" fill="#a09c00"/><rect x="2" y="2" width="1" height="1" fill="#a09c00"/><rect x="3" y="2" width="1" height="1" fill="#ffffff"/><rect x="4" y="2" width="6" height="1" fill="#f8f088"/><rect x="10" y="2" width="6" height="1" fill="#a09c00"/><rect x="2" y="3" width="1" height="1" fill="#a09c00"/><rect x="3" y="3" width="1" height="1" fill="#ffffff"/><rect x="4" y="3" width="11" height="1" fill="#f8f088"/><rect x="15" y="3" width="1" height="1" fill="#a09c00"/><rect x="16" y="3" width="1" height="1" fill="#000000"/><rect x="2" y="4" width="1" height="1" fill="#a09c00"/><rect x="3" y="4" width="1" height="1" fill="#ffffff"/><rect x="4" y="4" width="11" height="1" fill="#f8f088"/><rect x="15" y="4" width="1" height="1" fill="#a09c00"/><rect x="16" y="4" width="1" height="1" fill="#000000"/><rect x="1" y="5" width="12" height="1" fill="#a09c00"/><rect x="13" y="5" width="2" height="1" fill="#f8f088"/><rect x="15" y="5" width="1" height="1" fill="#a09c00"/><rect x="16" y="5" width="1" height="1" fill="#000000"/><rect x="1" y="6" width="1" height="1" fill="#a09c00"/><rect x="2" y="6" width="1" height="1" fill="#ffffff"/><rect x="3" y="6" width="3" height="1" fill="#f8f088"/><rect x="6" y="6" width="1" height="1" fill="#f5c8a0"/><rect x="7" y="6" width="1" height="1" fill="#f8f088"/><rect x="8" y="6" width="1" height="1" fill="#f5c8a0"/><rect x="9" y="6" width="3" height="1" fill="#f8f088"/><rect x="12" y="6" width="1" height="1" fill="#000000"/><rect x="13" y="6" width="2" height="1" fill="#f8f088"/><rect x="15" y="6" width="1" height="1" fill="#a09c00"/><rect x="16" y="6" width="1" height="1" fill="#000000"/><rect x="1" y="7" width="1" height="1" fill="#a09c00"/><rect x="2" y="7" width="1" height="1" fill="#ffffff"/><rect x="3" y="7" width="1" height="1" fill="#f8f088"/><rect x="4" y="7" width="1" height="1" fill="#f5c8a0"/><rect x="5" y="7" width="1" height="1" fill="#f8f088"/><rect x="6" y="7" width="1" height="1" fill="#f5c8a0"/><rect x="7" y="7" width="1" height="1" fill="#f8f088"/><rect x="8" y="7" width="5" height="1" fill="#f5c8a0"/><rect x="13" y="7" width="1" height="1" fill="#000000"/><rect x="14" y="7" width="1" height="1" fill="#f8f088"/><rect x="15" y="7" width="1" height="1" fill="#a09c00"/><rect x="16" y="7" width="1" height="1" fill="#000000"/><rect x="2" y="8" width="1" height="1" fill="#a09c00"/><rect x="3" y="8" width="2" height="1" fill="#f8f088"/><rect x="5" y="8" width="1" height="1" fill="#f5c8a0"/><rect x="6" y="8" width="1" height="1" fill="#f8f088"/><rect x="7" y="8" width="6" height="1" fill="#f5c8a0"/><rect x="13" y="8" width="1" height="1" fill="#000000"/><rect x="14" y="8" width="1" height="1" fill="#f8f088"/><rect x="15" y="8" width="1" height="1" fill="#a09c00"/><rect x="16" y="8" width="1" height="1" fill="#000000"/><rect x="2" y="9" width="1" height="1" fill="#a09c00"/><rect x="3" y="9" width="1" height="1" fill="#ffffff"/><rect x="4" y="9" width="1" height="1" fill="#f5c8a0"/><rect x="5" y="9" width="1" height="1" fill="#f8f088"/><rect x="6" y="9" width="7" height="1" fill="#f5c8a0"/><rect x="13" y="9" width="2" height="1" fill="#f8f088"/><rect x="15" y="9" width="1" height="1" fill="#a09c00"/><rect x="16" y="9" width="1" height="1" fill="#000000"/><rect x="3" y="10" width="1" height="1" fill="#a09c00"/><rect x="4" y="10" width="1" height="1" fill="#f8f088"/><rect x="5" y="10" width="9" height="1" fill="#f5c8a0"/><rect x="14" y="10" width="1" height="1" fill="#f8f088"/><rect x="15" y="10" width="1" height="1" fill="#a09c00"/><rect x="16" y="10" width="1" height="1" fill="#000000"/><rect x="3" y="11" width="13" height="1" fill="#a09c00"/><rect x="16" y="11" width="1" height="1" fill="#000000"/><rect x="4" y="12" width="13" height="1" fill="#000000"/></svg>
<div class="t sy" style="left:44px;top:250px;font:13px 'Liberation Sans';color:#170a6a">Reservations</div>
<div class="a" style="left:33px;top:274px;width:12px;height:1px;background:repeating-linear-gradient(90deg,#7a7a7a 0 1px,transparent 1px 2px)"></div>
<svg class="a" style="left:45px;top:266px" width="13" height="16" shape-rendering="crispEdges"><rect x="0" y="0" width="10" height="1" fill="#8c8c8c"/><rect x="0" y="1" width="1" height="1" fill="#8c8c8c"/><rect x="1" y="1" width="8" height="1" fill="#fcfce0"/><rect x="9" y="1" width="1" height="1" fill="#8c8c8c"/><rect x="10" y="1" width="1" height="1" fill="#000000"/><rect x="0" y="2" width="1" height="1" fill="#8c8c8c"/><rect x="1" y="2" width="1" height="1" fill="#fcfce0"/><rect x="2" y="2" width="3" height="1" fill="#c2c2ca"/><rect x="5" y="2" width="1" height="1" fill="#fcfce0"/><rect x="6" y="2" width="2" height="1" fill="#c2c2ca"/><rect x="8" y="2" width="1" height="1" fill="#fcfce0"/><rect x="9" y="2" width="1" height="1" fill="#8c8c8c"/><rect x="10" y="2" width="1" height="1" fill="#fcfce0"/><rect x="11" y="2" width="1" height="1" fill="#000000"/><rect x="0" y="3" width="1" height="1" fill="#8c8c8c"/><rect x="1" y="3" width="5" height="1" fill="#fcfce0"/><rect x="6" y="3" width="1" height="1" fill="#c2c2ca"/><rect x="7" y="3" width="2" height="1" fill="#fcfce0"/><rect x="9" y="3" width="4" height="1" fill="#000000"/><rect x="0" y="4" width="1" height="1" fill="#8c8c8c"/><rect x="1" y="4" width="1" height="1" fill="#fcfce0"/><rect x="2" y="4" width="3" height="1" fill="#c2c2ca"/><rect x="5" y="4" width="1" height="1" fill="#fcfce0"/><rect x="6" y="4" width="1" height="1" fill="#c2c2ca"/><rect x="7" y="4" width="1" height="1" fill="#fcfce0"/><rect x="8" y="4" width="1" height="1" fill="#c2c2ca"/><rect x="9" y="4" width="2" height="1" fill="#fcfce0"/><rect x="11" y="4" width="1" height="1" fill="#d9d9de"/><rect x="12" y="4" width="1" height="1" fill="#000000"/><rect x="0" y="5" width="1" height="1" fill="#8c8c8c"/><rect x="1" y="5" width="5" height="1" fill="#fcfce0"/><rect x="6" y="5" width="1" height="1" fill="#c2c2ca"/><rect x="7" y="5" width="1" height="1" fill="#fcfce0"/><rect x="8" y="5" width="1" height="1" fill="#c2c2ca"/><rect x="9" y="5" width="2" height="1" fill="#fcfce0"/><rect x="11" y="5" width="1" height="1" fill="#d9d9de"/><rect x="12" y="5" width="1" height="1" fill="#000000"/><rect x="0" y="6" width="1" height="1" fill="#8c8c8c"/><rect x="1" y="6" width="1" height="1" fill="#fcfce0"/><rect x="2" y="6" width="3" height="1" fill="#c2c2ca"/><rect x="5" y="6" width="1" height="1" fill="#fcfce0"/><rect x="6" y="6" width="3" height="1" fill="#c2c2ca"/><rect x="9" y="6" width="2" height="1" fill="#fcfce0"/><rect x="11" y="6" width="1" height="1" fill="#d9d9de"/><rect x="12" y="6" width="1" height="1" fill="#000000"/><rect x="0" y="7" width="1" height="1" fill="#8c8c8c"/><rect x="1" y="7" width="10" height="1" fill="#fcfce0"/><rect x="11" y="7" width="1" height="1" fill="#d9d9de"/><rect x="12" y="7" width="1" height="1" fill="#000000"/><rect x="0" y="8" width="1" height="1" fill="#8c8c8c"/><rect x="1" y="8" width="1" height="1" fill="#fcfce0"/><rect x="2" y="8" width="8" height="1" fill="#c2c2ca"/><rect x="10" y="8" width="1" height="1" fill="#fcfce0"/><rect x="11" y="8" width="1" height="1" fill="#d9d9de"/><rect x="12" y="8" width="1" height="1" fill="#000000"/><rect x="0" y="9" width="1" height="1" fill="#8c8c8c"/><rect x="1" y="9" width="10" height="1" fill="#fcfce0"/><rect x="11" y="9" width="1" height="1" fill="#d9d9de"/><rect x="12" y="9" width="1" height="1" fill="#000000"/><rect x="0" y="10" width="1" height="1" fill="#8c8c8c"/><rect x="1" y="10" width="1" height="1" fill="#fcfce0"/><rect x="2" y="10" width="8" height="1" fill="#c2c2ca"/><rect x="10" y="10" width="1" height="1" fill="#fcfce0"/><rect x="11" y="10" width="1" height="1" fill="#d9d9de"/><rect x="12" y="10" width="1" height="1" fill="#000000"/><rect x="0" y="11" width="1" height="1" fill="#8c8c8c"/><rect x="1" y="11" width="10" height="1" fill="#fcfce0"/><rect x="11" y="11" width="1" height="1" fill="#d9d9de"/><rect x="12" y="11" width="1" height="1" fill="#000000"/><rect x="0" y="12" width="1" height="1" fill="#8c8c8c"/><rect x="1" y="12" width="5" height="1" fill="#fcfce0"/><rect x="6" y="12" width="4" height="1" fill="#c2c2ca"/><rect x="10" y="12" width="1" height="1" fill="#fcfce0"/><rect x="11" y="12" width="1" height="1" fill="#d9d9de"/><rect x="12" y="12" width="1" height="1" fill="#000000"/><rect x="0" y="13" width="1" height="1" fill="#8c8c8c"/><rect x="1" y="13" width="10" height="1" fill="#fcfce0"/><rect x="11" y="13" width="1" height="1" fill="#d9d9de"/><rect x="12" y="13" width="1" height="1" fill="#000000"/><rect x="0" y="14" width="1" height="1" fill="#8c8c8c"/><rect x="1" y="14" width="11" height="1" fill="#d9d9de"/><rect x="12" y="14" width="1" height="1" fill="#000000"/><rect x="0" y="15" width="1" height="1" fill="#8c8c8c"/><rect x="1" y="15" width="12" height="1" fill="#000000"/></svg>
<div class="t sy" style="left:63px;top:268px;font:13px 'Liberation Sans';color:#170a6a">Calendar</div>
<div class="a" style="left:33px;top:292px;width:12px;height:1px;background:repeating-linear-gradient(90deg,#7a7a7a 0 1px,transparent 1px 2px)"></div>
<svg class="a" style="left:45px;top:284px" width="13" height="16" shape-rendering="crispEdges"><rect x="0" y="0" width="10" height="1" fill="#8c8c8c"/><rect x="0" y="1" width="1" height="1" fill="#8c8c8c"/><rect x="1" y="1" width="8" height="1" fill="#fcfce0"/><rect x="9" y="1" width="1" height="1" fill="#8c8c8c"/><rect x="10" y="1" width="1" height="1" fill="#000000"/><rect x="0" y="2" width="1" height="1" fill="#8c8c8c"/><rect x="1" y="2" width="1" height="1" fill="#fcfce0"/><rect x="2" y="2" width="3" height="1" fill="#c2c2ca"/><rect x="5" y="2" width="1" height="1" fill="#fcfce0"/><rect x="6" y="2" width="2" height="1" fill="#c2c2ca"/><rect x="8" y="2" width="1" height="1" fill="#fcfce0"/><rect x="9" y="2" width="1" height="1" fill="#8c8c8c"/><rect x="10" y="2" width="1" height="1" fill="#fcfce0"/><rect x="11" y="2" width="1" height="1" fill="#000000"/><rect x="0" y="3" width="1" height="1" fill="#8c8c8c"/><rect x="1" y="3" width="5" height="1" fill="#fcfce0"/><rect x="6" y="3" width="1" height="1" fill="#c2c2ca"/><rect x="7" y="3" width="2" height="1" fill="#fcfce0"/><rect x="9" y="3" width="4" height="1" fill="#000000"/><rect x="0" y="4" width="1" height="1" fill="#8c8c8c"/><rect x="1" y="4" width="1" height="1" fill="#fcfce0"/><rect x="2" y="4" width="3" height="1" fill="#c2c2ca"/><rect x="5" y="4" width="1" height="1" fill="#fcfce0"/><rect x="6" y="4" width="1" height="1" fill="#c2c2ca"/><rect x="7" y="4" width="1" height="1" fill="#fcfce0"/><rect x="8" y="4" width="1" height="1" fill="#c2c2ca"/><rect x="9" y="4" width="2" height="1" fill="#fcfce0"/><rect x="11" y="4" width="1" height="1" fill="#d9d9de"/><rect x="12" y="4" width="1" height="1" fill="#000000"/><rect x="0" y="5" width="1" height="1" fill="#8c8c8c"/><rect x="1" y="5" width="5" height="1" fill="#fcfce0"/><rect x="6" y="5" width="1" height="1" fill="#c2c2ca"/><rect x="7" y="5" width="1" height="1" fill="#fcfce0"/><rect x="8" y="5" width="1" height="1" fill="#c2c2ca"/><rect x="9" y="5" width="2" height="1" fill="#fcfce0"/><rect x="11" y="5" width="1" height="1" fill="#d9d9de"/><rect x="12" y="5" width="1" height="1" fill="#000000"/><rect x="0" y="6" width="1" height="1" fill="#8c8c8c"/><rect x="1" y="6" width="1" height="1" fill="#fcfce0"/><rect x="2" y="6" width="3" height="1" fill="#c2c2ca"/><rect x="5" y="6" width="1" height="1" fill="#fcfce0"/><rect x="6" y="6" width="3" height="1" fill="#c2c2ca"/><rect x="9" y="6" width="2" height="1" fill="#fcfce0"/><rect x="11" y="6" width="1" height="1" fill="#d9d9de"/><rect x="12" y="6" width="1" height="1" fill="#000000"/><rect x="0" y="7" width="1" height="1" fill="#8c8c8c"/><rect x="1" y="7" width="10" height="1" fill="#fcfce0"/><rect x="11" y="7" width="1" height="1" fill="#d9d9de"/><rect x="12" y="7" width="1" height="1" fill="#000000"/><rect x="0" y="8" width="1" height="1" fill="#8c8c8c"/><rect x="1" y="8" width="1" height="1" fill="#fcfce0"/><rect x="2" y="8" width="8" height="1" fill="#c2c2ca"/><rect x="10" y="8" width="1" height="1" fill="#fcfce0"/><rect x="11" y="8" width="1" height="1" fill="#d9d9de"/><rect x="12" y="8" width="1" height="1" fill="#000000"/><rect x="0" y="9" width="1" height="1" fill="#8c8c8c"/><rect x="1" y="9" width="10" height="1" fill="#fcfce0"/><rect x="11" y="9" width="1" height="1" fill="#d9d9de"/><rect x="12" y="9" width="1" height="1" fill="#000000"/><rect x="0" y="10" width="1" height="1" fill="#8c8c8c"/><rect x="1" y="10" width="1" height="1" fill="#fcfce0"/><rect x="2" y="10" width="8" height="1" fill="#c2c2ca"/><rect x="10" y="10" width="1" height="1" fill="#fcfce0"/><rect x="11" y="10" width="1" height="1" fill="#d9d9de"/><rect x="12" y="10" width="1" height="1" fill="#000000"/><rect x="0" y="11" width="1" height="1" fill="#8c8c8c"/><rect x="1" y="11" width="10" height="1" fill="#fcfce0"/><rect x="11" y="11" width="1" height="1" fill="#d9d9de"/><rect x="12" y="11" width="1" height="1" fill="#000000"/><rect x="0" y="12" width="1" height="1" fill="#8c8c8c"/><rect x="1" y="12" width="5" height="1" fill="#fcfce0"/><rect x="6" y="12" width="4" height="1" fill="#c2c2ca"/><rect x="10" y="12" width="1" height="1" fill="#fcfce0"/><rect x="11" y="12" width="1" height="1" fill="#d9d9de"/><rect x="12" y="12" width="1" height="1" fill="#000000"/><rect x="0" y="13" width="1" height="1" fill="#8c8c8c"/><rect x="1" y="13" width="10" height="1" fill="#fcfce0"/><rect x="11" y="13" width="1" height="1" fill="#d9d9de"/><rect x="12" y="13" width="1" height="1" fill="#000000"/><rect x="0" y="14" width="1" height="1" fill="#8c8c8c"/><rect x="1" y="14" width="11" height="1" fill="#d9d9de"/><rect x="12" y="14" width="1" height="1" fill="#000000"/><rect x="0" y="15" width="1" height="1" fill="#8c8c8c"/><rect x="1" y="15" width="12" height="1" fill="#000000"/></svg>
<div class="t sy" style="left:63px;top:286px;font:13px 'Liberation Sans';color:#170a6a">Monthly View</div>
<div class="a" style="left:33px;top:311px;width:12px;height:1px;background:repeating-linear-gradient(90deg,#7a7a7a 0 1px,transparent 1px 2px)"></div>
<svg class="a" style="left:45px;top:303px" width="13" height="16" shape-rendering="crispEdges"><rect x="0" y="0" width="10" height="1" fill="#8c8c8c"/><rect x="0" y="1" width="1" height="1" fill="#8c8c8c"/><rect x="1" y="1" width="8" height="1" fill="#fcfce0"/><rect x="9" y="1" width="1" height="1" fill="#8c8c8c"/><rect x="10" y="1" width="1" height="1" fill="#000000"/><rect x="0" y="2" width="1" height="1" fill="#8c8c8c"/><rect x="1" y="2" width="1" height="1" fill="#fcfce0"/><rect x="2" y="2" width="3" height="1" fill="#c2c2ca"/><rect x="5" y="2" width="1" height="1" fill="#fcfce0"/><rect x="6" y="2" width="2" height="1" fill="#c2c2ca"/><rect x="8" y="2" width="1" height="1" fill="#fcfce0"/><rect x="9" y="2" width="1" height="1" fill="#8c8c8c"/><rect x="10" y="2" width="1" height="1" fill="#fcfce0"/><rect x="11" y="2" width="1" height="1" fill="#000000"/><rect x="0" y="3" width="1" height="1" fill="#8c8c8c"/><rect x="1" y="3" width="5" height="1" fill="#fcfce0"/><rect x="6" y="3" width="1" height="1" fill="#c2c2ca"/><rect x="7" y="3" width="2" height="1" fill="#fcfce0"/><rect x="9" y="3" width="4" height="1" fill="#000000"/><rect x="0" y="4" width="1" height="1" fill="#8c8c8c"/><rect x="1" y="4" width="1" height="1" fill="#fcfce0"/><rect x="2" y="4" width="3" height="1" fill="#c2c2ca"/><rect x="5" y="4" width="1" height="1" fill="#fcfce0"/><rect x="6" y="4" width="1" height="1" fill="#c2c2ca"/><rect x="7" y="4" width="1" height="1" fill="#fcfce0"/><rect x="8" y="4" width="1" height="1" fill="#c2c2ca"/><rect x="9" y="4" width="2" height="1" fill="#fcfce0"/><rect x="11" y="4" width="1" height="1" fill="#d9d9de"/><rect x="12" y="4" width="1" height="1" fill="#000000"/><rect x="0" y="5" width="1" height="1" fill="#8c8c8c"/><rect x="1" y="5" width="5" height="1" fill="#fcfce0"/><rect x="6" y="5" width="1" height="1" fill="#c2c2ca"/><rect x="7" y="5" width="1" height="1" fill="#fcfce0"/><rect x="8" y="5" width="1" height="1" fill="#c2c2ca"/><rect x="9" y="5" width="2" height="1" fill="#fcfce0"/><rect x="11" y="5" width="1" height="1" fill="#d9d9de"/><rect x="12" y="5" width="1" height="1" fill="#000000"/><rect x="0" y="6" width="1" height="1" fill="#8c8c8c"/><rect x="1" y="6" width="1" height="1" fill="#fcfce0"/><rect x="2" y="6" width="3" height="1" fill="#c2c2ca"/><rect x="5" y="6" width="1" height="1" fill="#fcfce0"/><rect x="6" y="6" width="3" height="1" fill="#c2c2ca"/><rect x="9" y="6" width="2" height="1" fill="#fcfce0"/><rect x="11" y="6" width="1" height="1" fill="#d9d9de"/><rect x="12" y="6" width="1" height="1" fill="#000000"/><rect x="0" y="7" width="1" height="1" fill="#8c8c8c"/><rect x="1" y="7" width="10" height="1" fill="#fcfce0"/><rect x="11" y="7" width="1" height="1" fill="#d9d9de"/><rect x="12" y="7" width="1" height="1" fill="#000000"/><rect x="0" y="8" width="1" height="1" fill="#8c8c8c"/><rect x="1" y="8" width="1" height="1" fill="#fcfce0"/><rect x="2" y="8" width="8" height="1" fill="#c2c2ca"/><rect x="10" y="8" width="1" height="1" fill="#fcfce0"/><rect x="11" y="8" width="1" height="1" fill="#d9d9de"/><rect x="12" y="8" width="1" height="1" fill="#000000"/><rect x="0" y="9" width="1" height="1" fill="#8c8c8c"/><rect x="1" y="9" width="10" height="1" fill="#fcfce0"/><rect x="11" y="9" width="1" height="1" fill="#d9d9de"/><rect x="12" y="9" width="1" height="1" fill="#000000"/><rect x="0" y="10" width="1" height="1" fill="#8c8c8c"/><rect x="1" y="10" width="1" height="1" fill="#fcfce0"/><rect x="2" y="10" width="8" height="1" fill="#c2c2ca"/><rect x="10" y="10" width="1" height="1" fill="#fcfce0"/><rect x="11" y="10" width="1" height="1" fill="#d9d9de"/><rect x="12" y="10" width="1" height="1" fill="#000000"/><rect x="0" y="11" width="1" height="1" fill="#8c8c8c"/><rect x="1" y="11" width="10" height="1" fill="#fcfce0"/><rect x="11" y="11" width="1" height="1" fill="#d9d9de"/><rect x="12" y="11" width="1" height="1" fill="#000000"/><rect x="0" y="12" width="1" height="1" fill="#8c8c8c"/><rect x="1" y="12" width="5" height="1" fill="#fcfce0"/><rect x="6" y="12" width="4" height="1" fill="#c2c2ca"/><rect x="10" y="12" width="1" height="1" fill="#fcfce0"/><rect x="11" y="12" width="1" height="1" fill="#d9d9de"/><rect x="12" y="12" width="1" height="1" fill="#000000"/><rect x="0" y="13" width="1" height="1" fill="#8c8c8c"/><rect x="1" y="13" width="10" height="1" fill="#fcfce0"/><rect x="11" y="13" width="1" height="1" fill="#d9d9de"/><rect x="12" y="13" width="1" height="1" fill="#000000"/><rect x="0" y="14" width="1" height="1" fill="#8c8c8c"/><rect x="1" y="14" width="11" height="1" fill="#d9d9de"/><rect x="12" y="14" width="1" height="1" fill="#000000"/><rect x="0" y="15" width="1" height="1" fill="#8c8c8c"/><rect x="1" y="15" width="12" height="1" fill="#000000"/></svg>
<div class="t sy" style="left:63px;top:305px;font:13px 'Liberation Sans';color:#170a6a">Weekly View</div>
<div class="a" style="left:33px;top:330px;width:12px;height:1px;background:repeating-linear-gradient(90deg,#7a7a7a 0 1px,transparent 1px 2px)"></div>
<svg class="a" style="left:45px;top:322px" width="13" height="16" shape-rendering="crispEdges"><rect x="0" y="0" width="10" height="1" fill="#8c8c8c"/><rect x="0" y="1" width="1" height="1" fill="#8c8c8c"/><rect x="1" y="1" width="8" height="1" fill="#fcfce0"/><rect x="9" y="1" width="1" height="1" fill="#8c8c8c"/><rect x="10" y="1" width="1" height="1" fill="#000000"/><rect x="0" y="2" width="1" height="1" fill="#8c8c8c"/><rect x="1" y="2" width="1" height="1" fill="#fcfce0"/><rect x="2" y="2" width="3" height="1" fill="#c2c2ca"/><rect x="5" y="2" width="1" height="1" fill="#fcfce0"/><rect x="6" y="2" width="2" height="1" fill="#c2c2ca"/><rect x="8" y="2" width="1" height="1" fill="#fcfce0"/><rect x="9" y="2" width="1" height="1" fill="#8c8c8c"/><rect x="10" y="2" width="1" height="1" fill="#fcfce0"/><rect x="11" y="2" width="1" height="1" fill="#000000"/><rect x="0" y="3" width="1" height="1" fill="#8c8c8c"/><rect x="1" y="3" width="5" height="1" fill="#fcfce0"/><rect x="6" y="3" width="1" height="1" fill="#c2c2ca"/><rect x="7" y="3" width="2" height="1" fill="#fcfce0"/><rect x="9" y="3" width="4" height="1" fill="#000000"/><rect x="0" y="4" width="1" height="1" fill="#8c8c8c"/><rect x="1" y="4" width="1" height="1" fill="#fcfce0"/><rect x="2" y="4" width="3" height="1" fill="#c2c2ca"/><rect x="5" y="4" width="1" height="1" fill="#fcfce0"/><rect x="6" y="4" width="1" height="1" fill="#c2c2ca"/><rect x="7" y="4" width="1" height="1" fill="#fcfce0"/><rect x="8" y="4" width="1" height="1" fill="#c2c2ca"/><rect x="9" y="4" width="2" height="1" fill="#fcfce0"/><rect x="11" y="4" width="1" height="1" fill="#d9d9de"/><rect x="12" y="4" width="1" height="1" fill="#000000"/><rect x="0" y="5" width="1" height="1" fill="#8c8c8c"/><rect x="1" y="5" width="5" height="1" fill="#fcfce0"/><rect x="6" y="5" width="1" height="1" fill="#c2c2ca"/><rect x="7" y="5" width="1" height="1" fill="#fcfce0"/><rect x="8" y="5" width="1" height="1" fill="#c2c2ca"/><rect x="9" y="5" width="2" height="1" fill="#fcfce0"/><rect x="11" y="5" width="1" height="1" fill="#d9d9de"/><rect x="12" y="5" width="1" height="1" fill="#000000"/><rect x="0" y="6" width="1" height="1" fill="#8c8c8c"/><rect x="1" y="6" width="1" height="1" fill="#fcfce0"/><rect x="2" y="6" width="3" height="1" fill="#c2c2ca"/><rect x="5" y="6" width="1" height="1" fill="#fcfce0"/><rect x="6" y="6" width="3" height="1" fill="#c2c2ca"/><rect x="9" y="6" width="2" height="1" fill="#fcfce0"/><rect x="11" y="6" width="1" height="1" fill="#d9d9de"/><rect x="12" y="6" width="1" height="1" fill="#000000"/><rect x="0" y="7" width="1" height="1" fill="#8c8c8c"/><rect x="1" y="7" width="10" height="1" fill="#fcfce0"/><rect x="11" y="7" width="1" height="1" fill="#d9d9de"/><rect x="12" y="7" width="1" height="1" fill="#000000"/><rect x="0" y="8" width="1" height="1" fill="#8c8c8c"/><rect x="1" y="8" width="1" height="1" fill="#fcfce0"/><rect x="2" y="8" width="8" height="1" fill="#c2c2ca"/><rect x="10" y="8" width="1" height="1" fill="#fcfce0"/><rect x="11" y="8" width="1" height="1" fill="#d9d9de"/><rect x="12" y="8" width="1" height="1" fill="#000000"/><rect x="0" y="9" width="1" height="1" fill="#8c8c8c"/><rect x="1" y="9" width="10" height="1" fill="#fcfce0"/><rect x="11" y="9" width="1" height="1" fill="#d9d9de"/><rect x="12" y="9" width="1" height="1" fill="#000000"/><rect x="0" y="10" width="1" height="1" fill="#8c8c8c"/><rect x="1" y="10" width="1" height="1" fill="#fcfce0"/><rect x="2" y="10" width="8" height="1" fill="#c2c2ca"/><rect x="10" y="10" width="1" height="1" fill="#fcfce0"/><rect x="11" y="10" width="1" height="1" fill="#d9d9de"/><rect x="12" y="10" width="1" height="1" fill="#000000"/><rect x="0" y="11" width="1" height="1" fill="#8c8c8c"/><rect x="1" y="11" width="10" height="1" fill="#fcfce0"/><rect x="11" y="11" width="1" height="1" fill="#d9d9de"/><rect x="12" y="11" width="1" height="1" fill="#000000"/><rect x="0" y="12" width="1" height="1" fill="#8c8c8c"/><rect x="1" y="12" width="5" height="1" fill="#fcfce0"/><rect x="6" y="12" width="4" height="1" fill="#c2c2ca"/><rect x="10" y="12" width="1" height="1" fill="#fcfce0"/><rect x="11" y="12" width="1" height="1" fill="#d9d9de"/><rect x="12" y="12" width="1" height="1" fill="#000000"/><rect x="0" y="13" width="1" height="1" fill="#8c8c8c"/><rect x="1" y="13" width="10" height="1" fill="#fcfce0"/><rect x="11" y="13" width="1" height="1" fill="#d9d9de"/><rect x="12" y="13" width="1" height="1" fill="#000000"/><rect x="0" y="14" width="1" height="1" fill="#8c8c8c"/><rect x="1" y="14" width="11" height="1" fill="#d9d9de"/><rect x="12" y="14" width="1" height="1" fill="#000000"/><rect x="0" y="15" width="1" height="1" fill="#8c8c8c"/><rect x="1" y="15" width="12" height="1" fill="#000000"/></svg>
<div class="t sy" style="left:63px;top:324px;font:13px 'Liberation Sans';color:#170a6a">RESI Navigator</div>
<div class="a" style="left:33px;top:349px;width:12px;height:1px;background:repeating-linear-gradient(90deg,#7a7a7a 0 1px,transparent 1px 2px)"></div>
<svg class="a" style="left:45px;top:341px" width="13" height="16" shape-rendering="crispEdges"><rect x="0" y="0" width="10" height="1" fill="#8c8c8c"/><rect x="0" y="1" width="1" height="1" fill="#8c8c8c"/><rect x="1" y="1" width="8" height="1" fill="#fcfce0"/><rect x="9" y="1" width="1" height="1" fill="#8c8c8c"/><rect x="10" y="1" width="1" height="1" fill="#000000"/><rect x="0" y="2" width="1" height="1" fill="#8c8c8c"/><rect x="1" y="2" width="1" height="1" fill="#fcfce0"/><rect x="2" y="2" width="3" height="1" fill="#c2c2ca"/><rect x="5" y="2" width="1" height="1" fill="#fcfce0"/><rect x="6" y="2" width="2" height="1" fill="#c2c2ca"/><rect x="8" y="2" width="1" height="1" fill="#fcfce0"/><rect x="9" y="2" width="1" height="1" fill="#8c8c8c"/><rect x="10" y="2" width="1" height="1" fill="#fcfce0"/><rect x="11" y="2" width="1" height="1" fill="#000000"/><rect x="0" y="3" width="1" height="1" fill="#8c8c8c"/><rect x="1" y="3" width="5" height="1" fill="#fcfce0"/><rect x="6" y="3" width="1" height="1" fill="#c2c2ca"/><rect x="7" y="3" width="2" height="1" fill="#fcfce0"/><rect x="9" y="3" width="4" height="1" fill="#000000"/><rect x="0" y="4" width="1" height="1" fill="#8c8c8c"/><rect x="1" y="4" width="1" height="1" fill="#fcfce0"/><rect x="2" y="4" width="3" height="1" fill="#c2c2ca"/><rect x="5" y="4" width="1" height="1" fill="#fcfce0"/><rect x="6" y="4" width="1" height="1" fill="#c2c2ca"/><rect x="7" y="4" width="1" height="1" fill="#fcfce0"/><rect x="8" y="4" width="1" height="1" fill="#c2c2ca"/><rect x="9" y="4" width="2" height="1" fill="#fcfce0"/><rect x="11" y="4" width="1" height="1" fill="#d9d9de"/><rect x="12" y="4" width="1" height="1" fill="#000000"/><rect x="0" y="5" width="1" height="1" fill="#8c8c8c"/><rect x="1" y="5" width="5" height="1" fill="#fcfce0"/><rect x="6" y="5" width="1" height="1" fill="#c2c2ca"/><rect x="7" y="5" width="1" height="1" fill="#fcfce0"/><rect x="8" y="5" width="1" height="1" fill="#c2c2ca"/><rect x="9" y="5" width="2" height="1" fill="#fcfce0"/><rect x="11" y="5" width="1" height="1" fill="#d9d9de"/><rect x="12" y="5" width="1" height="1" fill="#000000"/><rect x="0" y="6" width="1" height="1" fill="#8c8c8c"/><rect x="1" y="6" width="1" height="1" fill="#fcfce0"/><rect x="2" y="6" width="3" height="1" fill="#c2c2ca"/><rect x="5" y="6" width="1" height="1" fill="#fcfce0"/><rect x="6" y="6" width="3" height="1" fill="#c2c2ca"/><rect x="9" y="6" width="2" height="1" fill="#fcfce0"/><rect x="11" y="6" width="1" height="1" fill="#d9d9de"/><rect x="12" y="6" width="1" height="1" fill="#000000"/><rect x="0" y="7" width="1" height="1" fill="#8c8c8c"/><rect x="1" y="7" width="10" height="1" fill="#fcfce0"/><rect x="11" y="7" width="1" height="1" fill="#d9d9de"/><rect x="12" y="7" width="1" height="1" fill="#000000"/><rect x="0" y="8" width="1" height="1" fill="#8c8c8c"/><rect x="1" y="8" width="1" height="1" fill="#fcfce0"/><rect x="2" y="8" width="8" height="1" fill="#c2c2ca"/><rect x="10" y="8" width="1" height="1" fill="#fcfce0"/><rect x="11" y="8" width="1" height="1" fill="#d9d9de"/><rect x="12" y="8" width="1" height="1" fill="#000000"/><rect x="0" y="9" width="1" height="1" fill="#8c8c8c"/><rect x="1" y="9" width="10" height="1" fill="#fcfce0"/><rect x="11" y="9" width="1" height="1" fill="#d9d9de"/><rect x="12" y="9" width="1" height="1" fill="#000000"/><rect x="0" y="10" width="1" height="1" fill="#8c8c8c"/><rect x="1" y="10" width="1" height="1" fill="#fcfce0"/><rect x="2" y="10" width="8" height="1" fill="#c2c2ca"/><rect x="10" y="10" width="1" height="1" fill="#fcfce0"/><rect x="11" y="10" width="1" height="1" fill="#d9d9de"/><rect x="12" y="10" width="1" height="1" fill="#000000"/><rect x="0" y="11" width="1" height="1" fill="#8c8c8c"/><rect x="1" y="11" width="10" height="1" fill="#fcfce0"/><rect x="11" y="11" width="1" height="1" fill="#d9d9de"/><rect x="12" y="11" width="1" height="1" fill="#000000"/><rect x="0" y="12" width="1" height="1" fill="#8c8c8c"/><rect x="1" y="12" width="5" height="1" fill="#fcfce0"/><rect x="6" y="12" width="4" height="1" fill="#c2c2ca"/><rect x="10" y="12" width="1" height="1" fill="#fcfce0"/><rect x="11" y="12" width="1" height="1" fill="#d9d9de"/><rect x="12" y="12" width="1" height="1" fill="#000000"/><rect x="0" y="13" width="1" height="1" fill="#8c8c8c"/><rect x="1" y="13" width="10" height="1" fill="#fcfce0"/><rect x="11" y="13" width="1" height="1" fill="#d9d9de"/><rect x="12" y="13" width="1" height="1" fill="#000000"/><rect x="0" y="14" width="1" height="1" fill="#8c8c8c"/><rect x="1" y="14" width="11" height="1" fill="#d9d9de"/><rect x="12" y="14" width="1" height="1" fill="#000000"/><rect x="0" y="15" width="1" height="1" fill="#8c8c8c"/><rect x="1" y="15" width="12" height="1" fill="#000000"/></svg>
<div class="t sy" style="left:63px;top:343px;font:13px 'Liberation Sans';color:#170a6a">Today</div>
<div class="a" style="left:33px;top:369px;width:12px;height:1px;background:repeating-linear-gradient(90deg,#7a7a7a 0 1px,transparent 1px 2px)"></div>
<svg class="a" style="left:45px;top:361px" width="13" height="16" shape-rendering="crispEdges"><rect x="0" y="0" width="10" height="1" fill="#8c8c8c"/><rect x="0" y="1" width="1" height="1" fill="#8c8c8c"/><rect x="1" y="1" width="8" height="1" fill="#fcfce0"/><rect x="9" y="1" width="1" height="1" fill="#8c8c8c"/><rect x="10" y="1" width="1" height="1" fill="#000000"/><rect x="0" y="2" width="1" height="1" fill="#8c8c8c"/><rect x="1" y="2" width="1" height="1" fill="#fcfce0"/><rect x="2" y="2" width="3" height="1" fill="#c2c2ca"/><rect x="5" y="2" width="1" height="1" fill="#fcfce0"/><rect x="6" y="2" width="2" height="1" fill="#c2c2ca"/><rect x="8" y="2" width="1" height="1" fill="#fcfce0"/><rect x="9" y="2" width="1" height="1" fill="#8c8c8c"/><rect x="10" y="2" width="1" height="1" fill="#fcfce0"/><rect x="11" y="2" width="1" height="1" fill="#000000"/><rect x="0" y="3" width="1" height="1" fill="#8c8c8c"/><rect x="1" y="3" width="5" height="1" fill="#fcfce0"/><rect x="6" y="3" width="1" height="1" fill="#c2c2ca"/><rect x="7" y="3" width="2" height="1" fill="#fcfce0"/><rect x="9" y="3" width="4" height="1" fill="#000000"/><rect x="0" y="4" width="1" height="1" fill="#8c8c8c"/><rect x="1" y="4" width="1" height="1" fill="#fcfce0"/><rect x="2" y="4" width="3" height="1" fill="#c2c2ca"/><rect x="5" y="4" width="1" height="1" fill="#fcfce0"/><rect x="6" y="4" width="1" height="1" fill="#c2c2ca"/><rect x="7" y="4" width="1" height="1" fill="#fcfce0"/><rect x="8" y="4" width="1" height="1" fill="#c2c2ca"/><rect x="9" y="4" width="2" height="1" fill="#fcfce0"/><rect x="11" y="4" width="1" height="1" fill="#d9d9de"/><rect x="12" y="4" width="1" height="1" fill="#000000"/><rect x="0" y="5" width="1" height="1" fill="#8c8c8c"/><rect x="1" y="5" width="5" height="1" fill="#fcfce0"/><rect x="6" y="5" width="1" height="1" fill="#c2c2ca"/><rect x="7" y="5" width="1" height="1" fill="#fcfce0"/><rect x="8" y="5" width="1" height="1" fill="#c2c2ca"/><rect x="9" y="5" width="2" height="1" fill="#fcfce0"/><rect x="11" y="5" width="1" height="1" fill="#d9d9de"/><rect x="12" y="5" width="1" height="1" fill="#000000"/><rect x="0" y="6" width="1" height="1" fill="#8c8c8c"/><rect x="1" y="6" width="1" height="1" fill="#fcfce0"/><rect x="2" y="6" width="3" height="1" fill="#c2c2ca"/><rect x="5" y="6" width="1" height="1" fill="#fcfce0"/><rect x="6" y="6" width="3" height="1" fill="#c2c2ca"/><rect x="9" y="6" width="2" height="1" fill="#fcfce0"/><rect x="11" y="6" width="1" height="1" fill="#d9d9de"/><rect x="12" y="6" width="1" height="1" fill="#000000"/><rect x="0" y="7" width="1" height="1" fill="#8c8c8c"/><rect x="1" y="7" width="10" height="1" fill="#fcfce0"/><rect x="11" y="7" width="1" height="1" fill="#d9d9de"/><rect x="12" y="7" width="1" height="1" fill="#000000"/><rect x="0" y="8" width="1" height="1" fill="#8c8c8c"/><rect x="1" y="8" width="1" height="1" fill="#fcfce0"/><rect x="2" y="8" width="8" height="1" fill="#c2c2ca"/><rect x="10" y="8" width="1" height="1" fill="#fcfce0"/><rect x="11" y="8" width="1" height="1" fill="#d9d9de"/><rect x="12" y="8" width="1" height="1" fill="#000000"/><rect x="0" y="9" width="1" height="1" fill="#8c8c8c"/><rect x="1" y="9" width="10" height="1" fill="#fcfce0"/><rect x="11" y="9" width="1" height="1" fill="#d9d9de"/><rect x="12" y="9" width="1" height="1" fill="#000000"/><rect x="0" y="10" width="1" height="1" fill="#8c8c8c"/><rect x="1" y="10" width="1" height="1" fill="#fcfce0"/><rect x="2" y="10" width="8" height="1" fill="#c2c2ca"/><rect x="10" y="10" width="1" height="1" fill="#fcfce0"/><rect x="11" y="10" width="1" height="1" fill="#d9d9de"/><rect x="12" y="10" width="1" height="1" fill="#000000"/><rect x="0" y="11" width="1" height="1" fill="#8c8c8c"/><rect x="1" y="11" width="10" height="1" fill="#fcfce0"/><rect x="11" y="11" width="1" height="1" fill="#d9d9de"/><rect x="12" y="11" width="1" height="1" fill="#000000"/><rect x="0" y="12" width="1" height="1" fill="#8c8c8c"/><rect x="1" y="12" width="5" height="1" fill="#fcfce0"/><rect x="6" y="12" width="4" height="1" fill="#c2c2ca"/><rect x="10" y="12" width="1" height="1" fill="#fcfce0"/><rect x="11" y="12" width="1" height="1" fill="#d9d9de"/><rect x="12" y="12" width="1" height="1" fill="#000000"/><rect x="0" y="13" width="1" height="1" fill="#8c8c8c"/><rect x="1" y="13" width="10" height="1" fill="#fcfce0"/><rect x="11" y="13" width="1" height="1" fill="#d9d9de"/><rect x="12" y="13" width="1" height="1" fill="#000000"/><rect x="0" y="14" width="1" height="1" fill="#8c8c8c"/><rect x="1" y="14" width="11" height="1" fill="#d9d9de"/><rect x="12" y="14" width="1" height="1" fill="#000000"/><rect x="0" y="15" width="1" height="1" fill="#8c8c8c"/><rect x="1" y="15" width="12" height="1" fill="#000000"/></svg>
<div class="t sy" style="left:63px;top:363px;font:13px 'Liberation Sans';color:#170a6a">My reservations</div>
<div class="a" style="left:33px;top:389px;width:12px;height:1px;background:repeating-linear-gradient(90deg,#7a7a7a 0 1px,transparent 1px 2px)"></div>
<svg class="a" style="left:45px;top:381px" width="13" height="16" shape-rendering="crispEdges"><rect x="0" y="0" width="10" height="1" fill="#8c8c8c"/><rect x="0" y="1" width="1" height="1" fill="#8c8c8c"/><rect x="1" y="1" width="8" height="1" fill="#fcfce0"/><rect x="9" y="1" width="1" height="1" fill="#8c8c8c"/><rect x="10" y="1" width="1" height="1" fill="#000000"/><rect x="0" y="2" width="1" height="1" fill="#8c8c8c"/><rect x="1" y="2" width="1" height="1" fill="#fcfce0"/><rect x="2" y="2" width="3" height="1" fill="#c2c2ca"/><rect x="5" y="2" width="1" height="1" fill="#fcfce0"/><rect x="6" y="2" width="2" height="1" fill="#c2c2ca"/><rect x="8" y="2" width="1" height="1" fill="#fcfce0"/><rect x="9" y="2" width="1" height="1" fill="#8c8c8c"/><rect x="10" y="2" width="1" height="1" fill="#fcfce0"/><rect x="11" y="2" width="1" height="1" fill="#000000"/><rect x="0" y="3" width="1" height="1" fill="#8c8c8c"/><rect x="1" y="3" width="5" height="1" fill="#fcfce0"/><rect x="6" y="3" width="1" height="1" fill="#c2c2ca"/><rect x="7" y="3" width="2" height="1" fill="#fcfce0"/><rect x="9" y="3" width="4" height="1" fill="#000000"/><rect x="0" y="4" width="1" height="1" fill="#8c8c8c"/><rect x="1" y="4" width="1" height="1" fill="#fcfce0"/><rect x="2" y="4" width="3" height="1" fill="#c2c2ca"/><rect x="5" y="4" width="1" height="1" fill="#fcfce0"/><rect x="6" y="4" width="1" height="1" fill="#c2c2ca"/><rect x="7" y="4" width="1" height="1" fill="#fcfce0"/><rect x="8" y="4" width="1" height="1" fill="#c2c2ca"/><rect x="9" y="4" width="2" height="1" fill="#fcfce0"/><rect x="11" y="4" width="1" height="1" fill="#d9d9de"/><rect x="12" y="4" width="1" height="1" fill="#000000"/><rect x="0" y="5" width="1" height="1" fill="#8c8c8c"/><rect x="1" y="5" width="5" height="1" fill="#fcfce0"/><rect x="6" y="5" width="1" height="1" fill="#c2c2ca"/><rect x="7" y="5" width="1" height="1" fill="#fcfce0"/><rect x="8" y="5" width="1" height="1" fill="#c2c2ca"/><rect x="9" y="5" width="2" height="1" fill="#fcfce0"/><rect x="11" y="5" width="1" height="1" fill="#d9d9de"/><rect x="12" y="5" width="1" height="1" fill="#000000"/><rect x="0" y="6" width="1" height="1" fill="#8c8c8c"/><rect x="1" y="6" width="1" height="1" fill="#fcfce0"/><rect x="2" y="6" width="3" height="1" fill="#c2c2ca"/><rect x="5" y="6" width="1" height="1" fill="#fcfce0"/><rect x="6" y="6" width="3" height="1" fill="#c2c2ca"/><rect x="9" y="6" width="2" height="1" fill="#fcfce0"/><rect x="11" y="6" width="1" height="1" fill="#d9d9de"/><rect x="12" y="6" width="1" height="1" fill="#000000"/><rect x="0" y="7" width="1" height="1" fill="#8c8c8c"/><rect x="1" y="7" width="10" height="1" fill="#fcfce0"/><rect x="11" y="7" width="1" height="1" fill="#d9d9de"/><rect x="12" y="7" width="1" height="1" fill="#000000"/><rect x="0" y="8" width="1" height="1" fill="#8c8c8c"/><rect x="1" y="8" width="1" height="1" fill="#fcfce0"/><rect x="2" y="8" width="8" height="1" fill="#c2c2ca"/><rect x="10" y="8" width="1" height="1" fill="#fcfce0"/><rect x="11" y="8" width="1" height="1" fill="#d9d9de"/><rect x="12" y="8" width="1" height="1" fill="#000000"/><rect x="0" y="9" width="1" height="1" fill="#8c8c8c"/><rect x="1" y="9" width="10" height="1" fill="#fcfce0"/><rect x="11" y="9" width="1" height="1" fill="#d9d9de"/><rect x="12" y="9" width="1" height="1" fill="#000000"/><rect x="0" y="10" width="1" height="1" fill="#8c8c8c"/><rect x="1" y="10" width="1" height="1" fill="#fcfce0"/><rect x="2" y="10" width="8" height="1" fill="#c2c2ca"/><rect x="10" y="10" width="1" height="1" fill="#fcfce0"/><rect x="11" y="10" width="1" height="1" fill="#d9d9de"/><rect x="12" y="10" width="1" height="1" fill="#000000"/><rect x="0" y="11" width="1" height="1" fill="#8c8c8c"/><rect x="1" y="11" width="10" height="1" fill="#fcfce0"/><rect x="11" y="11" width="1" height="1" fill="#d9d9de"/><rect x="12" y="11" width="1" height="1" fill="#000000"/><rect x="0" y="12" width="1" height="1" fill="#8c8c8c"/><rect x="1" y="12" width="5" height="1" fill="#fcfce0"/><rect x="6" y="12" width="4" height="1" fill="#c2c2ca"/><rect x="10" y="12" width="1" height="1" fill="#fcfce0"/><rect x="11" y="12" width="1" height="1" fill="#d9d9de"/><rect x="12" y="12" width="1" height="1" fill="#000000"/><rect x="0" y="13" width="1" height="1" fill="#8c8c8c"/><rect x="1" y="13" width="10" height="1" fill="#fcfce0"/><rect x="11" y="13" width="1" height="1" fill="#d9d9de"/><rect x="12" y="13" width="1" height="1" fill="#000000"/><rect x="0" y="14" width="1" height="1" fill="#8c8c8c"/><rect x="1" y="14" width="11" height="1" fill="#d9d9de"/><rect x="12" y="14" width="1" height="1" fill="#000000"/><rect x="0" y="15" width="1" height="1" fill="#8c8c8c"/><rect x="1" y="15" width="12" height="1" fill="#000000"/></svg>
<div class="t sy" style="left:63px;top:383px;font:13px 'Liberation Sans';color:#170a6a">By date</div>
<div class="a" style="left:33px;top:409px;width:12px;height:1px;background:repeating-linear-gradient(90deg,#7a7a7a 0 1px,transparent 1px 2px)"></div>
<svg class="a" style="left:45px;top:401px" width="13" height="16" shape-rendering="crispEdges"><rect x="0" y="0" width="10" height="1" fill="#8c8c8c"/><rect x="0" y="1" width="1" height="1" fill="#8c8c8c"/><rect x="1" y="1" width="8" height="1" fill="#fcfce0"/><rect x="9" y="1" width="1" height="1" fill="#8c8c8c"/><rect x="10" y="1" width="1" height="1" fill="#000000"/><rect x="0" y="2" width="1" height="1" fill="#8c8c8c"/><rect x="1" y="2" width="1" height="1" fill="#fcfce0"/><rect x="2" y="2" width="3" height="1" fill="#c2c2ca"/><rect x="5" y="2" width="1" height="1" fill="#fcfce0"/><rect x="6" y="2" width="2" height="1" fill="#c2c2ca"/><rect x="8" y="2" width="1" height="1" fill="#fcfce0"/><rect x="9" y="2" width="1" height="1" fill="#8c8c8c"/><rect x="10" y="2" width="1" height="1" fill="#fcfce0"/><rect x="11" y="2" width="1" height="1" fill="#000000"/><rect x="0" y="3" width="1" height="1" fill="#8c8c8c"/><rect x="1" y="3" width="5" height="1" fill="#fcfce0"/><rect x="6" y="3" width="1" height="1" fill="#c2c2ca"/><rect x="7" y="3" width="2" height="1" fill="#fcfce0"/><rect x="9" y="3" width="4" height="1" fill="#000000"/><rect x="0" y="4" width="1" height="1" fill="#8c8c8c"/><rect x="1" y="4" width="1" height="1" fill="#fcfce0"/><rect x="2" y="4" width="3" height="1" fill="#c2c2ca"/><rect x="5" y="4" width="1" height="1" fill="#fcfce0"/><rect x="6" y="4" width="1" height="1" fill="#c2c2ca"/><rect x="7" y="4" width="1" height="1" fill="#fcfce0"/><rect x="8" y="4" width="1" height="1" fill="#c2c2ca"/><rect x="9" y="4" width="2" height="1" fill="#fcfce0"/><rect x="11" y="4" width="1" height="1" fill="#d9d9de"/><rect x="12" y="4" width="1" height="1" fill="#000000"/><rect x="0" y="5" width="1" height="1" fill="#8c8c8c"/><rect x="1" y="5" width="5" height="1" fill="#fcfce0"/><rect x="6" y="5" width="1" height="1" fill="#c2c2ca"/><rect x="7" y="5" width="1" height="1" fill="#fcfce0"/><rect x="8" y="5" width="1" height="1" fill="#c2c2ca"/><rect x="9" y="5" width="2" height="1" fill="#fcfce0"/><rect x="11" y="5" width="1" height="1" fill="#d9d9de"/><rect x="12" y="5" width="1" height="1" fill="#000000"/><rect x="0" y="6" width="1" height="1" fill="#8c8c8c"/><rect x="1" y="6" width="1" height="1" fill="#fcfce0"/><rect x="2" y="6" width="3" height="1" fill="#c2c2ca"/><rect x="5" y="6" width="1" height="1" fill="#fcfce0"/><rect x="6" y="6" width="3" height="1" fill="#c2c2ca"/><rect x="9" y="6" width="2" height="1" fill="#fcfce0"/><rect x="11" y="6" width="1" height="1" fill="#d9d9de"/><rect x="12" y="6" width="1" height="1" fill="#000000"/><rect x="0" y="7" width="1" height="1" fill="#8c8c8c"/><rect x="1" y="7" width="10" height="1" fill="#fcfce0"/><rect x="11" y="7" width="1" height="1" fill="#d9d9de"/><rect x="12" y="7" width="1" height="1" fill="#000000"/><rect x="0" y="8" width="1" height="1" fill="#8c8c8c"/><rect x="1" y="8" width="1" height="1" fill="#fcfce0"/><rect x="2" y="8" width="8" height="1" fill="#c2c2ca"/><rect x="10" y="8" width="1" height="1" fill="#fcfce0"/><rect x="11" y="8" width="1" height="1" fill="#d9d9de"/><rect x="12" y="8" width="1" height="1" fill="#000000"/><rect x="0" y="9" width="1" height="1" fill="#8c8c8c"/><rect x="1" y="9" width="10" height="1" fill="#fcfce0"/><rect x="11" y="9" width="1" height="1" fill="#d9d9de"/><rect x="12" y="9" width="1" height="1" fill="#000000"/><rect x="0" y="10" width="1" height="1" fill="#8c8c8c"/><rect x="1" y="10" width="1" height="1" fill="#fcfce0"/><rect x="2" y="10" width="8" height="1" fill="#c2c2ca"/><rect x="10" y="10" width="1" height="1" fill="#fcfce0"/><rect x="11" y="10" width="1" height="1" fill="#d9d9de"/><rect x="12" y="10" width="1" height="1" fill="#000000"/><rect x="0" y="11" width="1" height="1" fill="#8c8c8c"/><rect x="1" y="11" width="10" height="1" fill="#fcfce0"/><rect x="11" y="11" width="1" height="1" fill="#d9d9de"/><rect x="12" y="11" width="1" height="1" fill="#000000"/><rect x="0" y="12" width="1" height="1" fill="#8c8c8c"/><rect x="1" y="12" width="5" height="1" fill="#fcfce0"/><rect x="6" y="12" width="4" height="1" fill="#c2c2ca"/><rect x="10" y="12" width="1" height="1" fill="#fcfce0"/><rect x="11" y="12" width="1" height="1" fill="#d9d9de"/><rect x="12" y="12" width="1" height="1" fill="#000000"/><rect x="0" y="13" width="1" height="1" fill="#8c8c8c"/><rect x="1" y="13" width="10" height="1" fill="#fcfce0"/><rect x="11" y="13" width="1" height="1" fill="#d9d9de"/><rect x="12" y="13" width="1" height="1" fill="#000000"/><rect x="0" y="14" width="1" height="1" fill="#8c8c8c"/><rect x="1" y="14" width="11" height="1" fill="#d9d9de"/><rect x="12" y="14" width="1" height="1" fill="#000000"/><rect x="0" y="15" width="1" height="1" fill="#8c8c8c"/><rect x="1" y="15" width="12" height="1" fill="#000000"/></svg>
<div class="t sy" style="left:63px;top:403px;font:13px 'Liberation Sans';color:#170a6a">By aircraft</div>
<div class="a" style="left:33px;top:429px;width:12px;height:1px;background:repeating-linear-gradient(90deg,#7a7a7a 0 1px,transparent 1px 2px)"></div>
<svg class="a" style="left:45px;top:421px" width="13" height="16" shape-rendering="crispEdges"><rect x="0" y="0" width="10" height="1" fill="#8c8c8c"/><rect x="0" y="1" width="1" height="1" fill="#8c8c8c"/><rect x="1" y="1" width="8" height="1" fill="#fcfce0"/><rect x="9" y="1" width="1" height="1" fill="#8c8c8c"/><rect x="10" y="1" width="1" height="1" fill="#000000"/><rect x="0" y="2" width="1" height="1" fill="#8c8c8c"/><rect x="1" y="2" width="1" height="1" fill="#fcfce0"/><rect x="2" y="2" width="3" height="1" fill="#c2c2ca"/><rect x="5" y="2" width="1" height="1" fill="#fcfce0"/><rect x="6" y="2" width="2" height="1" fill="#c2c2ca"/><rect x="8" y="2" width="1" height="1" fill="#fcfce0"/><rect x="9" y="2" width="1" height="1" fill="#8c8c8c"/><rect x="10" y="2" width="1" height="1" fill="#fcfce0"/><rect x="11" y="2" width="1" height="1" fill="#000000"/><rect x="0" y="3" width="1" height="1" fill="#8c8c8c"/><rect x="1" y="3" width="5" height="1" fill="#fcfce0"/><rect x="6" y="3" width="1" height="1" fill="#c2c2ca"/><rect x="7" y="3" width="2" height="1" fill="#fcfce0"/><rect x="9" y="3" width="4" height="1" fill="#000000"/><rect x="0" y="4" width="1" height="1" fill="#8c8c8c"/><rect x="1" y="4" width="1" height="1" fill="#fcfce0"/><rect x="2" y="4" width="3" height="1" fill="#c2c2ca"/><rect x="5" y="4" width="1" height="1" fill="#fcfce0"/><rect x="6" y="4" width="1" height="1" fill="#c2c2ca"/><rect x="7" y="4" width="1" height="1" fill="#fcfce0"/><rect x="8" y="4" width="1" height="1" fill="#c2c2ca"/><rect x="9" y="4" width="2" height="1" fill="#fcfce0"/><rect x="11" y="4" width="1" height="1" fill="#d9d9de"/><rect x="12" y="4" width="1" height="1" fill="#000000"/><rect x="0" y="5" width="1" height="1" fill="#8c8c8c"/><rect x="1" y="5" width="5" height="1" fill="#fcfce0"/><rect x="6" y="5" width="1" height="1" fill="#c2c2ca"/><rect x="7" y="5" width="1" height="1" fill="#fcfce0"/><rect x="8" y="5" width="1" height="1" fill="#c2c2ca"/><rect x="9" y="5" width="2" height="1" fill="#fcfce0"/><rect x="11" y="5" width="1" height="1" fill="#d9d9de"/><rect x="12" y="5" width="1" height="1" fill="#000000"/><rect x="0" y="6" width="1" height="1" fill="#8c8c8c"/><rect x="1" y="6" width="1" height="1" fill="#fcfce0"/><rect x="2" y="6" width="3" height="1" fill="#c2c2ca"/><rect x="5" y="6" width="1" height="1" fill="#fcfce0"/><rect x="6" y="6" width="3" height="1" fill="#c2c2ca"/><rect x="9" y="6" width="2" height="1" fill="#fcfce0"/><rect x="11" y="6" width="1" height="1" fill="#d9d9de"/><rect x="12" y="6" width="1" height="1" fill="#000000"/><rect x="0" y="7" width="1" height="1" fill="#8c8c8c"/><rect x="1" y="7" width="10" height="1" fill="#fcfce0"/><rect x="11" y="7" width="1" height="1" fill="#d9d9de"/><rect x="12" y="7" width="1" height="1" fill="#000000"/><rect x="0" y="8" width="1" height="1" fill="#8c8c8c"/><rect x="1" y="8" width="1" height="1" fill="#fcfce0"/><rect x="2" y="8" width="8" height="1" fill="#c2c2ca"/><rect x="10" y="8" width="1" height="1" fill="#fcfce0"/><rect x="11" y="8" width="1" height="1" fill="#d9d9de"/><rect x="12" y="8" width="1" height="1" fill="#000000"/><rect x="0" y="9" width="1" height="1" fill="#8c8c8c"/><rect x="1" y="9" width="10" height="1" fill="#fcfce0"/><rect x="11" y="9" width="1" height="1" fill="#d9d9de"/><rect x="12" y="9" width="1" height="1" fill="#000000"/><rect x="0" y="10" width="1" height="1" fill="#8c8c8c"/><rect x="1" y="10" width="1" height="1" fill="#fcfce0"/><rect x="2" y="10" width="8" height="1" fill="#c2c2ca"/><rect x="10" y="10" width="1" height="1" fill="#fcfce0"/><rect x="11" y="10" width="1" height="1" fill="#d9d9de"/><rect x="12" y="10" width="1" height="1" fill="#000000"/><rect x="0" y="11" width="1" height="1" fill="#8c8c8c"/><rect x="1" y="11" width="10" height="1" fill="#fcfce0"/><rect x="11" y="11" width="1" height="1" fill="#d9d9de"/><rect x="12" y="11" width="1" height="1" fill="#000000"/><rect x="0" y="12" width="1" height="1" fill="#8c8c8c"/><rect x="1" y="12" width="5" height="1" fill="#fcfce0"/><rect x="6" y="12" width="4" height="1" fill="#c2c2ca"/><rect x="10" y="12" width="1" height="1" fill="#fcfce0"/><rect x="11" y="12" width="1" height="1" fill="#d9d9de"/><rect x="12" y="12" width="1" height="1" fill="#000000"/><rect x="0" y="13" width="1" height="1" fill="#8c8c8c"/><rect x="1" y="13" width="10" height="1" fill="#fcfce0"/><rect x="11" y="13" width="1" height="1" fill="#d9d9de"/><rect x="12" y="13" width="1" height="1" fill="#000000"/><rect x="0" y="14" width="1" height="1" fill="#8c8c8c"/><rect x="1" y="14" width="11" height="1" fill="#d9d9de"/><rect x="12" y="14" width="1" height="1" fill="#000000"/><rect x="0" y="15" width="1" height="1" fill="#8c8c8c"/><rect x="1" y="15" width="12" height="1" fill="#000000"/></svg>
<div class="t sy" style="left:63px;top:423px;font:13px 'Liberation Sans';color:#170a6a">By user</div>
<div class="a" style="left:33px;top:449px;width:12px;height:1px;background:repeating-linear-gradient(90deg,#7a7a7a 0 1px,transparent 1px 2px)"></div>
<svg class="a" style="left:45px;top:441px" width="13" height="16" shape-rendering="crispEdges"><rect x="0" y="0" width="10" height="1" fill="#8c8c8c"/><rect x="0" y="1" width="1" height="1" fill="#8c8c8c"/><rect x="1" y="1" width="8" height="1" fill="#fcfce0"/><rect x="9" y="1" width="1" height="1" fill="#8c8c8c"/><rect x="10" y="1" width="1" height="1" fill="#000000"/><rect x="0" y="2" width="1" height="1" fill="#8c8c8c"/><rect x="1" y="2" width="1" height="1" fill="#fcfce0"/><rect x="2" y="2" width="3" height="1" fill="#c2c2ca"/><rect x="5" y="2" width="1" height="1" fill="#fcfce0"/><rect x="6" y="2" width="2" height="1" fill="#c2c2ca"/><rect x="8" y="2" width="1" height="1" fill="#fcfce0"/><rect x="9" y="2" width="1" height="1" fill="#8c8c8c"/><rect x="10" y="2" width="1" height="1" fill="#fcfce0"/><rect x="11" y="2" width="1" height="1" fill="#000000"/><rect x="0" y="3" width="1" height="1" fill="#8c8c8c"/><rect x="1" y="3" width="5" height="1" fill="#fcfce0"/><rect x="6" y="3" width="1" height="1" fill="#c2c2ca"/><rect x="7" y="3" width="2" height="1" fill="#fcfce0"/><rect x="9" y="3" width="4" height="1" fill="#000000"/><rect x="0" y="4" width="1" height="1" fill="#8c8c8c"/><rect x="1" y="4" width="1" height="1" fill="#fcfce0"/><rect x="2" y="4" width="3" height="1" fill="#c2c2ca"/><rect x="5" y="4" width="1" height="1" fill="#fcfce0"/><rect x="6" y="4" width="1" height="1" fill="#c2c2ca"/><rect x="7" y="4" width="1" height="1" fill="#fcfce0"/><rect x="8" y="4" width="1" height="1" fill="#c2c2ca"/><rect x="9" y="4" width="2" height="1" fill="#fcfce0"/><rect x="11" y="4" width="1" height="1" fill="#d9d9de"/><rect x="12" y="4" width="1" height="1" fill="#000000"/><rect x="0" y="5" width="1" height="1" fill="#8c8c8c"/><rect x="1" y="5" width="5" height="1" fill="#fcfce0"/><rect x="6" y="5" width="1" height="1" fill="#c2c2ca"/><rect x="7" y="5" width="1" height="1" fill="#fcfce0"/><rect x="8" y="5" width="1" height="1" fill="#c2c2ca"/><rect x="9" y="5" width="2" height="1" fill="#fcfce0"/><rect x="11" y="5" width="1" height="1" fill="#d9d9de"/><rect x="12" y="5" width="1" height="1" fill="#000000"/><rect x="0" y="6" width="1" height="1" fill="#8c8c8c"/><rect x="1" y="6" width="1" height="1" fill="#fcfce0"/><rect x="2" y="6" width="3" height="1" fill="#c2c2ca"/><rect x="5" y="6" width="1" height="1" fill="#fcfce0"/><rect x="6" y="6" width="3" height="1" fill="#c2c2ca"/><rect x="9" y="6" width="2" height="1" fill="#fcfce0"/><rect x="11" y="6" width="1" height="1" fill="#d9d9de"/><rect x="12" y="6" width="1" height="1" fill="#000000"/><rect x="0" y="7" width="1" height="1" fill="#8c8c8c"/><rect x="1" y="7" width="10" height="1" fill="#fcfce0"/><rect x="11" y="7" width="1" height="1" fill="#d9d9de"/><rect x="12" y="7" width="1" height="1" fill="#000000"/><rect x="0" y="8" width="1" height="1" fill="#8c8c8c"/><rect x="1" y="8" width="1" height="1" fill="#fcfce0"/><rect x="2" y="8" width="8" height="1" fill="#c2c2ca"/><rect x="10" y="8" width="1" height="1" fill="#fcfce0"/><rect x="11" y="8" width="1" height="1" fill="#d9d9de"/><rect x="12" y="8" width="1" height="1" fill="#000000"/><rect x="0" y="9" width="1" height="1" fill="#8c8c8c"/><rect x="1" y="9" width="10" height="1" fill="#fcfce0"/><rect x="11" y="9" width="1" height="1" fill="#d9d9de"/><rect x="12" y="9" width="1" height="1" fill="#000000"/><rect x="0" y="10" width="1" height="1" fill="#8c8c8c"/><rect x="1" y="10" width="1" height="1" fill="#fcfce0"/><rect x="2" y="10" width="8" height="1" fill="#c2c2ca"/><rect x="10" y="10" width="1" height="1" fill="#fcfce0"/><rect x="11" y="10" width="1" height="1" fill="#d9d9de"/><rect x="12" y="10" width="1" height="1" fill="#000000"/><rect x="0" y="11" width="1" height="1" fill="#8c8c8c"/><rect x="1" y="11" width="10" height="1" fill="#fcfce0"/><rect x="11" y="11" width="1" height="1" fill="#d9d9de"/><rect x="12" y="11" width="1" height="1" fill="#000000"/><rect x="0" y="12" width="1" height="1" fill="#8c8c8c"/><rect x="1" y="12" width="5" height="1" fill="#fcfce0"/><rect x="6" y="12" width="4" height="1" fill="#c2c2ca"/><rect x="10" y="12" width="1" height="1" fill="#fcfce0"/><rect x="11" y="12" width="1" height="1" fill="#d9d9de"/><rect x="12" y="12" width="1" height="1" fill="#000000"/><rect x="0" y="13" width="1" height="1" fill="#8c8c8c"/><rect x="1" y="13" width="10" height="1" fill="#fcfce0"/><rect x="11" y="13" width="1" height="1" fill="#d9d9de"/><rect x="12" y="13" width="1" height="1" fill="#000000"/><rect x="0" y="14" width="1" height="1" fill="#8c8c8c"/><rect x="1" y="14" width="11" height="1" fill="#d9d9de"/><rect x="12" y="14" width="1" height="1" fill="#000000"/><rect x="0" y="15" width="1" height="1" fill="#8c8c8c"/><rect x="1" y="15" width="12" height="1" fill="#000000"/></svg>
<div class="t sy" style="left:63px;top:443px;font:13px 'Liberation Sans';color:#170a6a">By instructor</div>
<div class="a" style="left:33px;top:468px;width:12px;height:1px;background:repeating-linear-gradient(90deg,#7a7a7a 0 1px,transparent 1px 2px)"></div>
<svg class="a" style="left:45px;top:460px" width="13" height="16" shape-rendering="crispEdges"><rect x="0" y="0" width="10" height="1" fill="#8c8c8c"/><rect x="0" y="1" width="1" height="1" fill="#8c8c8c"/><rect x="1" y="1" width="8" height="1" fill="#fcfce0"/><rect x="9" y="1" width="1" height="1" fill="#8c8c8c"/><rect x="10" y="1" width="1" height="1" fill="#000000"/><rect x="0" y="2" width="1" height="1" fill="#8c8c8c"/><rect x="1" y="2" width="1" height="1" fill="#fcfce0"/><rect x="2" y="2" width="3" height="1" fill="#c2c2ca"/><rect x="5" y="2" width="1" height="1" fill="#fcfce0"/><rect x="6" y="2" width="2" height="1" fill="#c2c2ca"/><rect x="8" y="2" width="1" height="1" fill="#fcfce0"/><rect x="9" y="2" width="1" height="1" fill="#8c8c8c"/><rect x="10" y="2" width="1" height="1" fill="#fcfce0"/><rect x="11" y="2" width="1" height="1" fill="#000000"/><rect x="0" y="3" width="1" height="1" fill="#8c8c8c"/><rect x="1" y="3" width="5" height="1" fill="#fcfce0"/><rect x="6" y="3" width="1" height="1" fill="#c2c2ca"/><rect x="7" y="3" width="2" height="1" fill="#fcfce0"/><rect x="9" y="3" width="4" height="1" fill="#000000"/><rect x="0" y="4" width="1" height="1" fill="#8c8c8c"/><rect x="1" y="4" width="1" height="1" fill="#fcfce0"/><rect x="2" y="4" width="3" height="1" fill="#c2c2ca"/><rect x="5" y="4" width="1" height="1" fill="#fcfce0"/><rect x="6" y="4" width="1" height="1" fill="#c2c2ca"/><rect x="7" y="4" width="1" height="1" fill="#fcfce0"/><rect x="8" y="4" width="1" height="1" fill="#c2c2ca"/><rect x="9" y="4" width="2" height="1" fill="#fcfce0"/><rect x="11" y="4" width="1" height="1" fill="#d9d9de"/><rect x="12" y="4" width="1" height="1" fill="#000000"/><rect x="0" y="5" width="1" height="1" fill="#8c8c8c"/><rect x="1" y="5" width="5" height="1" fill="#fcfce0"/><rect x="6" y="5" width="1" height="1" fill="#c2c2ca"/><rect x="7" y="5" width="1" height="1" fill="#fcfce0"/><rect x="8" y="5" width="1" height="1" fill="#c2c2ca"/><rect x="9" y="5" width="2" height="1" fill="#fcfce0"/><rect x="11" y="5" width="1" height="1" fill="#d9d9de"/><rect x="12" y="5" width="1" height="1" fill="#000000"/><rect x="0" y="6" width="1" height="1" fill="#8c8c8c"/><rect x="1" y="6" width="1" height="1" fill="#fcfce0"/><rect x="2" y="6" width="3" height="1" fill="#c2c2ca"/><rect x="5" y="6" width="1" height="1" fill="#fcfce0"/><rect x="6" y="6" width="3" height="1" fill="#c2c2ca"/><rect x="9" y="6" width="2" height="1" fill="#fcfce0"/><rect x="11" y="6" width="1" height="1" fill="#d9d9de"/><rect x="12" y="6" width="1" height="1" fill="#000000"/><rect x="0" y="7" width="1" height="1" fill="#8c8c8c"/><rect x="1" y="7" width="10" height="1" fill="#fcfce0"/><rect x="11" y="7" width="1" height="1" fill="#d9d9de"/><rect x="12" y="7" width="1" height="1" fill="#000000"/><rect x="0" y="8" width="1" height="1" fill="#8c8c8c"/><rect x="1" y="8" width="1" height="1" fill="#fcfce0"/><rect x="2" y="8" width="8" height="1" fill="#c2c2ca"/><rect x="10" y="8" width="1" height="1" fill="#fcfce0"/><rect x="11" y="8" width="1" height="1" fill="#d9d9de"/><rect x="12" y="8" width="1" height="1" fill="#000000"/><rect x="0" y="9" width="1" height="1" fill="#8c8c8c"/><rect x="1" y="9" width="10" height="1" fill="#fcfce0"/><rect x="11" y="9" width="1" height="1" fill="#d9d9de"/><rect x="12" y="9" width="1" height="1" fill="#000000"/><rect x="0" y="10" width="1" height="1" fill="#8c8c8c"/><rect x="1" y="10" width="1" height="1" fill="#fcfce0"/><rect x="2" y="10" width="8" height="1" fill="#c2c2ca"/><rect x="10" y="10" width="1" height="1" fill="#fcfce0"/><rect x="11" y="10" width="1" height="1" fill="#d9d9de"/><rect x="12" y="10" width="1" height="1" fill="#000000"/><rect x="0" y="11" width="1" height="1" fill="#8c8c8c"/><rect x="1" y="11" width="10" height="1" fill="#fcfce0"/><rect x="11" y="11" width="1" height="1" fill="#d9d9de"/><rect x="12" y="11" width="1" height="1" fill="#000000"/><rect x="0" y="12" width="1" height="1" fill="#8c8c8c"/><rect x="1" y="12" width="5" height="1" fill="#fcfce0"/><rect x="6" y="12" width="4" height="1" fill="#c2c2ca"/><rect x="10" y="12" width="1" height="1" fill="#fcfce0"/><rect x="11" y="12" width="1" height="1" fill="#d9d9de"/><rect x="12" y="12" width="1" height="1" fill="#000000"/><rect x="0" y="13" width="1" height="1" fill="#8c8c8c"/><rect x="1" y="13" width="10" height="1" fill="#fcfce0"/><rect x="11" y="13" width="1" height="1" fill="#d9d9de"/><rect x="12" y="13" width="1" height="1" fill="#000000"/><rect x="0" y="14" width="1" height="1" fill="#8c8c8c"/><rect x="1" y="14" width="11" height="1" fill="#d9d9de"/><rect x="12" y="14" width="1" height="1" fill="#000000"/><rect x="0" y="15" width="1" height="1" fill="#8c8c8c"/><rect x="1" y="15" width="12" height="1" fill="#000000"/></svg>
<div class="t sy" style="left:63px;top:462px;font:13px 'Liberation Sans';color:#170a6a">Expired</div>
<div class="a" style="left:33px;top:487px;width:12px;height:1px;background:repeating-linear-gradient(90deg,#7a7a7a 0 1px,transparent 1px 2px)"></div>
<svg class="a" style="left:45px;top:479px" width="13" height="16" shape-rendering="crispEdges"><rect x="0" y="0" width="10" height="1" fill="#8c8c8c"/><rect x="0" y="1" width="1" height="1" fill="#8c8c8c"/><rect x="1" y="1" width="8" height="1" fill="#fcfce0"/><rect x="9" y="1" width="1" height="1" fill="#8c8c8c"/><rect x="10" y="1" width="1" height="1" fill="#000000"/><rect x="0" y="2" width="1" height="1" fill="#8c8c8c"/><rect x="1" y="2" width="1" height="1" fill="#fcfce0"/><rect x="2" y="2" width="3" height="1" fill="#c2c2ca"/><rect x="5" y="2" width="1" height="1" fill="#fcfce0"/><rect x="6" y="2" width="2" height="1" fill="#c2c2ca"/><rect x="8" y="2" width="1" height="1" fill="#fcfce0"/><rect x="9" y="2" width="1" height="1" fill="#8c8c8c"/><rect x="10" y="2" width="1" height="1" fill="#fcfce0"/><rect x="11" y="2" width="1" height="1" fill="#000000"/><rect x="0" y="3" width="1" height="1" fill="#8c8c8c"/><rect x="1" y="3" width="5" height="1" fill="#fcfce0"/><rect x="6" y="3" width="1" height="1" fill="#c2c2ca"/><rect x="7" y="3" width="2" height="1" fill="#fcfce0"/><rect x="9" y="3" width="4" height="1" fill="#000000"/><rect x="0" y="4" width="1" height="1" fill="#8c8c8c"/><rect x="1" y="4" width="1" height="1" fill="#fcfce0"/><rect x="2" y="4" width="3" height="1" fill="#c2c2ca"/><rect x="5" y="4" width="1" height="1" fill="#fcfce0"/><rect x="6" y="4" width="1" height="1" fill="#c2c2ca"/><rect x="7" y="4" width="1" height="1" fill="#fcfce0"/><rect x="8" y="4" width="1" height="1" fill="#c2c2ca"/><rect x="9" y="4" width="2" height="1" fill="#fcfce0"/><rect x="11" y="4" width="1" height="1" fill="#d9d9de"/><rect x="12" y="4" width="1" height="1" fill="#000000"/><rect x="0" y="5" width="1" height="1" fill="#8c8c8c"/><rect x="1" y="5" width="5" height="1" fill="#fcfce0"/><rect x="6" y="5" width="1" height="1" fill="#c2c2ca"/><rect x="7" y="5" width="1" height="1" fill="#fcfce0"/><rect x="8" y="5" width="1" height="1" fill="#c2c2ca"/><rect x="9" y="5" width="2" height="1" fill="#fcfce0"/><rect x="11" y="5" width="1" height="1" fill="#d9d9de"/><rect x="12" y="5" width="1" height="1" fill="#000000"/><rect x="0" y="6" width="1" height="1" fill="#8c8c8c"/><rect x="1" y="6" width="1" height="1" fill="#fcfce0"/><rect x="2" y="6" width="3" height="1" fill="#c2c2ca"/><rect x="5" y="6" width="1" height="1" fill="#fcfce0"/><rect x="6" y="6" width="3" height="1" fill="#c2c2ca"/><rect x="9" y="6" width="2" height="1" fill="#fcfce0"/><rect x="11" y="6" width="1" height="1" fill="#d9d9de"/><rect x="12" y="6" width="1" height="1" fill="#000000"/><rect x="0" y="7" width="1" height="1" fill="#8c8c8c"/><rect x="1" y="7" width="10" height="1" fill="#fcfce0"/><rect x="11" y="7" width="1" height="1" fill="#d9d9de"/><rect x="12" y="7" width="1" height="1" fill="#000000"/><rect x="0" y="8" width="1" height="1" fill="#8c8c8c"/><rect x="1" y="8" width="1" height="1" fill="#fcfce0"/><rect x="2" y="8" width="8" height="1" fill="#c2c2ca"/><rect x="10" y="8" width="1" height="1" fill="#fcfce0"/><rect x="11" y="8" width="1" height="1" fill="#d9d9de"/><rect x="12" y="8" width="1" height="1" fill="#000000"/><rect x="0" y="9" width="1" height="1" fill="#8c8c8c"/><rect x="1" y="9" width="10" height="1" fill="#fcfce0"/><rect x="11" y="9" width="1" height="1" fill="#d9d9de"/><rect x="12" y="9" width="1" height="1" fill="#000000"/><rect x="0" y="10" width="1" height="1" fill="#8c8c8c"/><rect x="1" y="10" width="1" height="1" fill="#fcfce0"/><rect x="2" y="10" width="8" height="1" fill="#c2c2ca"/><rect x="10" y="10" width="1" height="1" fill="#fcfce0"/><rect x="11" y="10" width="1" height="1" fill="#d9d9de"/><rect x="12" y="10" width="1" height="1" fill="#000000"/><rect x="0" y="11" width="1" height="1" fill="#8c8c8c"/><rect x="1" y="11" width="10" height="1" fill="#fcfce0"/><rect x="11" y="11" width="1" height="1" fill="#d9d9de"/><rect x="12" y="11" width="1" height="1" fill="#000000"/><rect x="0" y="12" width="1" height="1" fill="#8c8c8c"/><rect x="1" y="12" width="5" height="1" fill="#fcfce0"/><rect x="6" y="12" width="4" height="1" fill="#c2c2ca"/><rect x="10" y="12" width="1" height="1" fill="#fcfce0"/><rect x="11" y="12" width="1" height="1" fill="#d9d9de"/><rect x="12" y="12" width="1" height="1" fill="#000000"/><rect x="0" y="13" width="1" height="1" fill="#8c8c8c"/><rect x="1" y="13" width="10" height="1" fill="#fcfce0"/><rect x="11" y="13" width="1" height="1" fill="#d9d9de"/><rect x="12" y="13" width="1" height="1" fill="#000000"/><rect x="0" y="14" width="1" height="1" fill="#8c8c8c"/><rect x="1" y="14" width="11" height="1" fill="#d9d9de"/><rect x="12" y="14" width="1" height="1" fill="#000000"/><rect x="0" y="15" width="1" height="1" fill="#8c8c8c"/><rect x="1" y="15" width="12" height="1" fill="#000000"/></svg>
<div class="t sy" style="left:63px;top:481px;font:13px 'Liberation Sans';color:#170a6a">Pending reservations</div>
<div class="a" style="left:15px;top:506px;width:11px;height:1px;background:repeating-linear-gradient(90deg,#7a7a7a 0 1px,transparent 1px 2px)"></div>
<svg class="a" style="left:25px;top:499px" width="17" height="13" shape-rendering="crispEdges"><rect x="4" y="0" width="5" height="1" fill="#a09c00"/><rect x="3" y="1" width="1" height="1" fill="#a09c00"/><rect x="4" y="1" width="5" height="1" fill="#ffffff"/><rect x="9" y="1" width="1" height="1" fill="#a09c00"/><rect x="2" y="2" width="1" height="1" fill="#a09c00"/><rect x="3" y="2" width="1" height="1" fill="#ffffff"/><rect x="4" y="2" width="6" height="1" fill="#f8f088"/><rect x="10" y="2" width="6" height="1" fill="#a09c00"/><rect x="2" y="3" width="1" height="1" fill="#a09c00"/><rect x="3" y="3" width="1" height="1" fill="#ffffff"/><rect x="4" y="3" width="11" height="1" fill="#f8f088"/><rect x="15" y="3" width="1" height="1" fill="#a09c00"/><rect x="16" y="3" width="1" height="1" fill="#000000"/><rect x="2" y="4" width="1" height="1" fill="#a09c00"/><rect x="3" y="4" width="1" height="1" fill="#ffffff"/><rect x="4" y="4" width="11" height="1" fill="#f8f088"/><rect x="15" y="4" width="1" height="1" fill="#a09c00"/><rect x="16" y="4" width="1" height="1" fill="#000000"/><rect x="1" y="5" width="12" height="1" fill="#a09c00"/><rect x="13" y="5" width="2" height="1" fill="#f8f088"/><rect x="15" y="5" width="1" height="1" fill="#a09c00"/><rect x="16" y="5" width="1" height="1" fill="#000000"/><rect x="1" y="6" width="1" height="1" fill="#a09c00"/><rect x="2" y="6" width="1" height="1" fill="#ffffff"/><rect x="3" y="6" width="3" height="1" fill="#f8f088"/><rect x="6" y="6" width="1" height="1" fill="#f5c8a0"/><rect x="7" y="6" width="1" height="1" fill="#f8f088"/><rect x="8" y="6" width="1" height="1" fill="#f5c8a0"/><rect x="9" y="6" width="3" height="1" fill="#f8f088"/><rect x="12" y="6" width="1" height="1" fill="#000000"/><rect x="13" y="6" width="2" height="1" fill="#f8f088"/><rect x="15" y="6" width="1" height="1" fill="#a09c00"/><rect x="16" y="6" width="1" height="1" fill="#000000"/><rect x="1" y="7" width="1" height="1" fill="#a09c00"/><rect x="2" y="7" width="1" height="1" fill="#ffffff"/><rect x="3" y="7" width="1" height="1" fill="#f8f088"/><rect x="4" y="7" width="1" height="1" fill="#f5c8a0"/><rect x="5" y="7" width="1" height="1" fill="#f8f088"/><rect x="6" y="7" width="1" height="1" fill="#f5c8a0"/><rect x="7" y="7" width="1" height="1" fill="#f8f088"/><rect x="8" y="7" width="5" height="1" fill="#f5c8a0"/><rect x="13" y="7" width="1" height="1" fill="#000000"/><rect x="14" y="7" width="1" height="1" fill="#f8f088"/><rect x="15" y="7" width="1" height="1" fill="#a09c00"/><rect x="16" y="7" width="1" height="1" fill="#000000"/><rect x="2" y="8" width="1" height="1" fill="#a09c00"/><rect x="3" y="8" width="2" height="1" fill="#f8f088"/><rect x="5" y="8" width="1" height="1" fill="#f5c8a0"/><rect x="6" y="8" width="1" height="1" fill="#f8f088"/><rect x="7" y="8" width="6" height="1" fill="#f5c8a0"/><rect x="13" y="8" width="1" height="1" fill="#000000"/><rect x="14" y="8" width="1" height="1" fill="#f8f088"/><rect x="15" y="8" width="1" height="1" fill="#a09c00"/><rect x="16" y="8" width="1" height="1" fill="#000000"/><rect x="2" y="9" width="1" height="1" fill="#a09c00"/><rect x="3" y="9" width="1" height="1" fill="#ffffff"/><rect x="4" y="9" width="1" height="1" fill="#f5c8a0"/><rect x="5" y="9" width="1" height="1" fill="#f8f088"/><rect x="6" y="9" width="7" height="1" fill="#f5c8a0"/><rect x="13" y="9" width="2" height="1" fill="#f8f088"/><rect x="15" y="9" width="1" height="1" fill="#a09c00"/><rect x="16" y="9" width="1" height="1" fill="#000000"/><rect x="3" y="10" width="1" height="1" fill="#a09c00"/><rect x="4" y="10" width="1" height="1" fill="#f8f088"/><rect x="5" y="10" width="9" height="1" fill="#f5c8a0"/><rect x="14" y="10" width="1" height="1" fill="#f8f088"/><rect x="15" y="10" width="1" height="1" fill="#a09c00"/><rect x="16" y="10" width="1" height="1" fill="#000000"/><rect x="3" y="11" width="13" height="1" fill="#a09c00"/><rect x="16" y="11" width="1" height="1" fill="#000000"/><rect x="4" y="12" width="13" height="1" fill="#000000"/></svg>
<div class="t sy" style="left:44px;top:500px;font:13px 'Liberation Sans';color:#170a6a">Info Center</div>
<div class="a" style="left:33px;top:524px;width:12px;height:1px;background:repeating-linear-gradient(90deg,#7a7a7a 0 1px,transparent 1px 2px)"></div>
<svg class="a" style="left:45px;top:516px" width="13" height="16" shape-rendering="crispEdges"><rect x="0" y="0" width="10" height="1" fill="#8c8c8c"/><rect x="0" y="1" width="1" height="1" fill="#8c8c8c"/><rect x="1" y="1" width="8" height="1" fill="#fcfce0"/><rect x="9" y="1" width="1" height="1" fill="#8c8c8c"/><rect x="10" y="1" width="1" height="1" fill="#000000"/><rect x="0" y="2" width="1" height="1" fill="#8c8c8c"/><rect x="1" y="2" width="1" height="1" fill="#fcfce0"/><rect x="2" y="2" width="3" height="1" fill="#c2c2ca"/><rect x="5" y="2" width="1" height="1" fill="#fcfce0"/><rect x="6" y="2" width="2" height="1" fill="#c2c2ca"/><rect x="8" y="2" width="1" height="1" fill="#fcfce0"/><rect x="9" y="2" width="1" height="1" fill="#8c8c8c"/><rect x="10" y="2" width="1" height="1" fill="#fcfce0"/><rect x="11" y="2" width="1" height="1" fill="#000000"/><rect x="0" y="3" width="1" height="1" fill="#8c8c8c"/><rect x="1" y="3" width="5" height="1" fill="#fcfce0"/><rect x="6" y="3" width="1" height="1" fill="#c2c2ca"/><rect x="7" y="3" width="2" height="1" fill="#fcfce0"/><rect x="9" y="3" width="4" height="1" fill="#000000"/><rect x="0" y="4" width="1" height="1" fill="#8c8c8c"/><rect x="1" y="4" width="1" height="1" fill="#fcfce0"/><rect x="2" y="4" width="3" height="1" fill="#c2c2ca"/><rect x="5" y="4" width="1" height="1" fill="#fcfce0"/><rect x="6" y="4" width="1" height="1" fill="#c2c2ca"/><rect x="7" y="4" width="1" height="1" fill="#fcfce0"/><rect x="8" y="4" width="1" height="1" fill="#c2c2ca"/><rect x="9" y="4" width="2" height="1" fill="#fcfce0"/><rect x="11" y="4" width="1" height="1" fill="#d9d9de"/><rect x="12" y="4" width="1" height="1" fill="#000000"/><rect x="0" y="5" width="1" height="1" fill="#8c8c8c"/><rect x="1" y="5" width="5" height="1" fill="#fcfce0"/><rect x="6" y="5" width="1" height="1" fill="#c2c2ca"/><rect x="7" y="5" width="1" height="1" fill="#fcfce0"/><rect x="8" y="5" width="1" height="1" fill="#c2c2ca"/><rect x="9" y="5" width="2" height="1" fill="#fcfce0"/><rect x="11" y="5" width="1" height="1" fill="#d9d9de"/><rect x="12" y="5" width="1" height="1" fill="#000000"/><rect x="0" y="6" width="1" height="1" fill="#8c8c8c"/><rect x="1" y="6" width="1" height="1" fill="#fcfce0"/><rect x="2" y="6" width="3" height="1" fill="#c2c2ca"/><rect x="5" y="6" width="1" height="1" fill="#fcfce0"/><rect x="6" y="6" width="3" height="1" fill="#c2c2ca"/><rect x="9" y="6" width="2" height="1" fill="#fcfce0"/><rect x="11" y="6" width="1" height="1" fill="#d9d9de"/><rect x="12" y="6" width="1" height="1" fill="#000000"/><rect x="0" y="7" width="1" height="1" fill="#8c8c8c"/><rect x="1" y="7" width="10" height="1" fill="#fcfce0"/><rect x="11" y="7" width="1" height="1" fill="#d9d9de"/><rect x="12" y="7" width="1" height="1" fill="#000000"/><rect x="0" y="8" width="1" height="1" fill="#8c8c8c"/><rect x="1" y="8" width="1" height="1" fill="#fcfce0"/><rect x="2" y="8" width="8" height="1" fill="#c2c2ca"/><rect x="10" y="8" width="1" height="1" fill="#fcfce0"/><rect x="11" y="8" width="1" height="1" fill="#d9d9de"/><rect x="12" y="8" width="1" height="1" fill="#000000"/><rect x="0" y="9" width="1" height="1" fill="#8c8c8c"/><rect x="1" y="9" width="10" height="1" fill="#fcfce0"/><rect x="11" y="9" width="1" height="1" fill="#d9d9de"/><rect x="12" y="9" width="1" height="1" fill="#000000"/><rect x="0" y="10" width="1" height="1" fill="#8c8c8c"/><rect x="1" y="10" width="1" height="1" fill="#fcfce0"/><rect x="2" y="10" width="8" height="1" fill="#c2c2ca"/><rect x="10" y="10" width="1" height="1" fill="#fcfce0"/><rect x="11" y="10" width="1" height="1" fill="#d9d9de"/><rect x="12" y="10" width="1" height="1" fill="#000000"/><rect x="0" y="11" width="1" height="1" fill="#8c8c8c"/><rect x="1" y="11" width="10" height="1" fill="#fcfce0"/><rect x="11" y="11" width="1" height="1" fill="#d9d9de"/><rect x="12" y="11" width="1" height="1" fill="#000000"/><rect x="0" y="12" width="1" height="1" fill="#8c8c8c"/><rect x="1" y="12" width="5" height="1" fill="#fcfce0"/><rect x="6" y="12" width="4" height="1" fill="#c2c2ca"/><rect x="10" y="12" width="1" height="1" fill="#fcfce0"/><rect x="11" y="12" width="1" height="1" fill="#d9d9de"/><rect x="12" y="12" width="1" height="1" fill="#000000"/><rect x="0" y="13" width="1" height="1" fill="#8c8c8c"/><rect x="1" y="13" width="10" height="1" fill="#fcfce0"/><rect x="11" y="13" width="1" height="1" fill="#d9d9de"/><rect x="12" y="13" width="1" height="1" fill="#000000"/><rect x="0" y="14" width="1" height="1" fill="#8c8c8c"/><rect x="1" y="14" width="11" height="1" fill="#d9d9de"/><rect x="12" y="14" width="1" height="1" fill="#000000"/><rect x="0" y="15" width="1" height="1" fill="#8c8c8c"/><rect x="1" y="15" width="12" height="1" fill="#000000"/></svg>
<div class="t sy" style="left:63px;top:518px;font:13px 'Liberation Sans';color:#170a6a">Show messages</div>
<div class="a" style="left:33px;top:542px;width:12px;height:1px;background:repeating-linear-gradient(90deg,#7a7a7a 0 1px,transparent 1px 2px)"></div>
<svg class="a" style="left:45px;top:534px" width="13" height="16" shape-rendering="crispEdges"><rect x="0" y="0" width="10" height="1" fill="#8c8c8c"/><rect x="0" y="1" width="1" height="1" fill="#8c8c8c"/><rect x="1" y="1" width="8" height="1" fill="#fcfce0"/><rect x="9" y="1" width="1" height="1" fill="#8c8c8c"/><rect x="10" y="1" width="1" height="1" fill="#000000"/><rect x="0" y="2" width="1" height="1" fill="#8c8c8c"/><rect x="1" y="2" width="1" height="1" fill="#fcfce0"/><rect x="2" y="2" width="3" height="1" fill="#c2c2ca"/><rect x="5" y="2" width="1" height="1" fill="#fcfce0"/><rect x="6" y="2" width="2" height="1" fill="#c2c2ca"/><rect x="8" y="2" width="1" height="1" fill="#fcfce0"/><rect x="9" y="2" width="1" height="1" fill="#8c8c8c"/><rect x="10" y="2" width="1" height="1" fill="#fcfce0"/><rect x="11" y="2" width="1" height="1" fill="#000000"/><rect x="0" y="3" width="1" height="1" fill="#8c8c8c"/><rect x="1" y="3" width="5" height="1" fill="#fcfce0"/><rect x="6" y="3" width="1" height="1" fill="#c2c2ca"/><rect x="7" y="3" width="2" height="1" fill="#fcfce0"/><rect x="9" y="3" width="4" height="1" fill="#000000"/><rect x="0" y="4" width="1" height="1" fill="#8c8c8c"/><rect x="1" y="4" width="1" height="1" fill="#fcfce0"/><rect x="2" y="4" width="3" height="1" fill="#c2c2ca"/><rect x="5" y="4" width="1" height="1" fill="#fcfce0"/><rect x="6" y="4" width="1" height="1" fill="#c2c2ca"/><rect x="7" y="4" width="1" height="1" fill="#fcfce0"/><rect x="8" y="4" width="1" height="1" fill="#c2c2ca"/><rect x="9" y="4" width="2" height="1" fill="#fcfce0"/><rect x="11" y="4" width="1" height="1" fill="#d9d9de"/><rect x="12" y="4" width="1" height="1" fill="#000000"/><rect x="0" y="5" width="1" height="1" fill="#8c8c8c"/><rect x="1" y="5" width="5" height="1" fill="#fcfce0"/><rect x="6" y="5" width="1" height="1" fill="#c2c2ca"/><rect x="7" y="5" width="1" height="1" fill="#fcfce0"/><rect x="8" y="5" width="1" height="1" fill="#c2c2ca"/><rect x="9" y="5" width="2" height="1" fill="#fcfce0"/><rect x="11" y="5" width="1" height="1" fill="#d9d9de"/><rect x="12" y="5" width="1" height="1" fill="#000000"/><rect x="0" y="6" width="1" height="1" fill="#8c8c8c"/><rect x="1" y="6" width="1" height="1" fill="#fcfce0"/><rect x="2" y="6" width="3" height="1" fill="#c2c2ca"/><rect x="5" y="6" width="1" height="1" fill="#fcfce0"/><rect x="6" y="6" width="3" height="1" fill="#c2c2ca"/><rect x="9" y="6" width="2" height="1" fill="#fcfce0"/><rect x="11" y="6" width="1" height="1" fill="#d9d9de"/><rect x="12" y="6" width="1" height="1" fill="#000000"/><rect x="0" y="7" width="1" height="1" fill="#8c8c8c"/><rect x="1" y="7" width="10" height="1" fill="#fcfce0"/><rect x="11" y="7" width="1" height="1" fill="#d9d9de"/><rect x="12" y="7" width="1" height="1" fill="#000000"/><rect x="0" y="8" width="1" height="1" fill="#8c8c8c"/><rect x="1" y="8" width="1" height="1" fill="#fcfce0"/><rect x="2" y="8" width="8" height="1" fill="#c2c2ca"/><rect x="10" y="8" width="1" height="1" fill="#fcfce0"/><rect x="11" y="8" width="1" height="1" fill="#d9d9de"/><rect x="12" y="8" width="1" height="1" fill="#000000"/><rect x="0" y="9" width="1" height="1" fill="#8c8c8c"/><rect x="1" y="9" width="10" height="1" fill="#fcfce0"/><rect x="11" y="9" width="1" height="1" fill="#d9d9de"/><rect x="12" y="9" width="1" height="1" fill="#000000"/><rect x="0" y="10" width="1" height="1" fill="#8c8c8c"/><rect x="1" y="10" width="1" height="1" fill="#fcfce0"/><rect x="2" y="10" width="8" height="1" fill="#c2c2ca"/><rect x="10" y="10" width="1" height="1" fill="#fcfce0"/><rect x="11" y="10" width="1" height="1" fill="#d9d9de"/><rect x="12" y="10" width="1" height="1" fill="#000000"/><rect x="0" y="11" width="1" height="1" fill="#8c8c8c"/><rect x="1" y="11" width="10" height="1" fill="#fcfce0"/><rect x="11" y="11" width="1" height="1" fill="#d9d9de"/><rect x="12" y="11" width="1" height="1" fill="#000000"/><rect x="0" y="12" width="1" height="1" fill="#8c8c8c"/><rect x="1" y="12" width="5" height="1" fill="#fcfce0"/><rect x="6" y="12" width="4" height="1" fill="#c2c2ca"/><rect x="10" y="12" width="1" height="1" fill="#fcfce0"/><rect x="11" y="12" width="1" height="1" fill="#d9d9de"/><rect x="12" y="12" width="1" height="1" fill="#000000"/><rect x="0" y="13" width="1" height="1" fill="#8c8c8c"/><rect x="1" y="13" width="10" height="1" fill="#fcfce0"/><rect x="11" y="13" width="1" height="1" fill="#d9d9de"/><rect x="12" y="13" width="1" height="1" fill="#000000"/><rect x="0" y="14" width="1" height="1" fill="#8c8c8c"/><rect x="1" y="14" width="11" height="1" fill="#d9d9de"/><rect x="12" y="14" width="1" height="1" fill="#000000"/><rect x="0" y="15" width="1" height="1" fill="#8c8c8c"/><rect x="1" y="15" width="12" height="1" fill="#000000"/></svg>
<div class="t sy" style="left:63px;top:536px;font:13px 'Liberation Sans';color:#170a6a">Memberlist</div>
<div class="a" style="left:33px;top:560px;width:12px;height:1px;background:repeating-linear-gradient(90deg,#7a7a7a 0 1px,transparent 1px 2px)"></div>
<svg class="a" style="left:45px;top:552px" width="13" height="16" shape-rendering="crispEdges"><rect x="0" y="0" width="10" height="1" fill="#8c8c8c"/><rect x="0" y="1" width="1" height="1" fill="#8c8c8c"/><rect x="1" y="1" width="8" height="1" fill="#fcfce0"/><rect x="9" y="1" width="1" height="1" fill="#8c8c8c"/><rect x="10" y="1" width="1" height="1" fill="#000000"/><rect x="0" y="2" width="1" height="1" fill="#8c8c8c"/><rect x="1" y="2" width="1" height="1" fill="#fcfce0"/><rect x="2" y="2" width="3" height="1" fill="#c2c2ca"/><rect x="5" y="2" width="1" height="1" fill="#fcfce0"/><rect x="6" y="2" width="2" height="1" fill="#c2c2ca"/><rect x="8" y="2" width="1" height="1" fill="#fcfce0"/><rect x="9" y="2" width="1" height="1" fill="#8c8c8c"/><rect x="10" y="2" width="1" height="1" fill="#fcfce0"/><rect x="11" y="2" width="1" height="1" fill="#000000"/><rect x="0" y="3" width="1" height="1" fill="#8c8c8c"/><rect x="1" y="3" width="5" height="1" fill="#fcfce0"/><rect x="6" y="3" width="1" height="1" fill="#c2c2ca"/><rect x="7" y="3" width="2" height="1" fill="#fcfce0"/><rect x="9" y="3" width="4" height="1" fill="#000000"/><rect x="0" y="4" width="1" height="1" fill="#8c8c8c"/><rect x="1" y="4" width="1" height="1" fill="#fcfce0"/><rect x="2" y="4" width="3" height="1" fill="#c2c2ca"/><rect x="5" y="4" width="1" height="1" fill="#fcfce0"/><rect x="6" y="4" width="1" height="1" fill="#c2c2ca"/><rect x="7" y="4" width="1" height="1" fill="#fcfce0"/><rect x="8" y="4" width="1" height="1" fill="#c2c2ca"/><rect x="9" y="4" width="2" height="1" fill="#fcfce0"/><rect x="11" y="4" width="1" height="1" fill="#d9d9de"/><rect x="12" y="4" width="1" height="1" fill="#000000"/><rect x="0" y="5" width="1" height="1" fill="#8c8c8c"/><rect x="1" y="5" width="5" height="1" fill="#fcfce0"/><rect x="6" y="5" width="1" height="1" fill="#c2c2ca"/><rect x="7" y="5" width="1" height="1" fill="#fcfce0"/><rect x="8" y="5" width="1" height="1" fill="#c2c2ca"/><rect x="9" y="5" width="2" height="1" fill="#fcfce0"/><rect x="11" y="5" width="1" height="1" fill="#d9d9de"/><rect x="12" y="5" width="1" height="1" fill="#000000"/><rect x="0" y="6" width="1" height="1" fill="#8c8c8c"/><rect x="1" y="6" width="1" height="1" fill="#fcfce0"/><rect x="2" y="6" width="3" height="1" fill="#c2c2ca"/><rect x="5" y="6" width="1" height="1" fill="#fcfce0"/><rect x="6" y="6" width="3" height="1" fill="#c2c2ca"/><rect x="9" y="6" width="2" height="1" fill="#fcfce0"/><rect x="11" y="6" width="1" height="1" fill="#d9d9de"/><rect x="12" y="6" width="1" height="1" fill="#000000"/><rect x="0" y="7" width="1" height="1" fill="#8c8c8c"/><rect x="1" y="7" width="10" height="1" fill="#fcfce0"/><rect x="11" y="7" width="1" height="1" fill="#d9d9de"/><rect x="12" y="7" width="1" height="1" fill="#000000"/><rect x="0" y="8" width="1" height="1" fill="#8c8c8c"/><rect x="1" y="8" width="1" height="1" fill="#fcfce0"/><rect x="2" y="8" width="8" height="1" fill="#c2c2ca"/><rect x="10" y="8" width="1" height="1" fill="#fcfce0"/><rect x="11" y="8" width="1" height="1" fill="#d9d9de"/><rect x="12" y="8" width="1" height="1" fill="#000000"/><rect x="0" y="9" width="1" height="1" fill="#8c8c8c"/><rect x="1" y="9" width="10" height="1" fill="#fcfce0"/><rect x="11" y="9" width="1" height="1" fill="#d9d9de"/><rect x="12" y="9" width="1" height="1" fill="#000000"/><rect x="0" y="10" width="1" height="1" fill="#8c8c8c"/><rect x="1" y="10" width="1" height="1" fill="#fcfce0"/><rect x="2" y="10" width="8" height="1" fill="#c2c2ca"/><rect x="10" y="10" width="1" height="1" fill="#fcfce0"/><rect x="11" y="10" width="1" height="1" fill="#d9d9de"/><rect x="12" y="10" width="1" height="1" fill="#000000"/><rect x="0" y="11" width="1" height="1" fill="#8c8c8c"/><rect x="1" y="11" width="10" height="1" fill="#fcfce0"/><rect x="11" y="11" width="1" height="1" fill="#d9d9de"/><rect x="12" y="11" width="1" height="1" fill="#000000"/><rect x="0" y="12" width="1" height="1" fill="#8c8c8c"/><rect x="1" y="12" width="5" height="1" fill="#fcfce0"/><rect x="6" y="12" width="4" height="1" fill="#c2c2ca"/><rect x="10" y="12" width="1" height="1" fill="#fcfce0"/><rect x="11" y="12" width="1" height="1" fill="#d9d9de"/><rect x="12" y="12" width="1" height="1" fill="#000000"/><rect x="0" y="13" width="1" height="1" fill="#8c8c8c"/><rect x="1" y="13" width="10" height="1" fill="#fcfce0"/><rect x="11" y="13" width="1" height="1" fill="#d9d9de"/><rect x="12" y="13" width="1" height="1" fill="#000000"/><rect x="0" y="14" width="1" height="1" fill="#8c8c8c"/><rect x="1" y="14" width="11" height="1" fill="#d9d9de"/><rect x="12" y="14" width="1" height="1" fill="#000000"/><rect x="0" y="15" width="1" height="1" fill="#8c8c8c"/><rect x="1" y="15" width="12" height="1" fill="#000000"/></svg>
<div class="t sy" style="left:63px;top:554px;font:13px 'Liberation Sans';color:#170a6a">GAT24 Online Selfbriefing</div>
<div class="a" style="left:15px;top:578px;width:12px;height:1px;background:repeating-linear-gradient(90deg,#7a7a7a 0 1px,transparent 1px 2px)"></div>
<svg class="a" style="left:27px;top:570px" width="13" height="16" shape-rendering="crispEdges"><rect x="0" y="0" width="10" height="1" fill="#8c8c8c"/><rect x="0" y="1" width="1" height="1" fill="#8c8c8c"/><rect x="1" y="1" width="8" height="1" fill="#fcfce0"/><rect x="9" y="1" width="1" height="1" fill="#8c8c8c"/><rect x="10" y="1" width="1" height="1" fill="#000000"/><rect x="0" y="2" width="1" height="1" fill="#8c8c8c"/><rect x="1" y="2" width="1" height="1" fill="#fcfce0"/><rect x="2" y="2" width="3" height="1" fill="#c2c2ca"/><rect x="5" y="2" width="1" height="1" fill="#fcfce0"/><rect x="6" y="2" width="2" height="1" fill="#c2c2ca"/><rect x="8" y="2" width="1" height="1" fill="#fcfce0"/><rect x="9" y="2" width="1" height="1" fill="#8c8c8c"/><rect x="10" y="2" width="1" height="1" fill="#fcfce0"/><rect x="11" y="2" width="1" height="1" fill="#000000"/><rect x="0" y="3" width="1" height="1" fill="#8c8c8c"/><rect x="1" y="3" width="5" height="1" fill="#fcfce0"/><rect x="6" y="3" width="1" height="1" fill="#c2c2ca"/><rect x="7" y="3" width="2" height="1" fill="#fcfce0"/><rect x="9" y="3" width="4" height="1" fill="#000000"/><rect x="0" y="4" width="1" height="1" fill="#8c8c8c"/><rect x="1" y="4" width="1" height="1" fill="#fcfce0"/><rect x="2" y="4" width="3" height="1" fill="#c2c2ca"/><rect x="5" y="4" width="1" height="1" fill="#fcfce0"/><rect x="6" y="4" width="1" height="1" fill="#c2c2ca"/><rect x="7" y="4" width="1" height="1" fill="#fcfce0"/><rect x="8" y="4" width="1" height="1" fill="#c2c2ca"/><rect x="9" y="4" width="2" height="1" fill="#fcfce0"/><rect x="11" y="4" width="1" height="1" fill="#d9d9de"/><rect x="12" y="4" width="1" height="1" fill="#000000"/><rect x="0" y="5" width="1" height="1" fill="#8c8c8c"/><rect x="1" y="5" width="5" height="1" fill="#fcfce0"/><rect x="6" y="5" width="1" height="1" fill="#c2c2ca"/><rect x="7" y="5" width="1" height="1" fill="#fcfce0"/><rect x="8" y="5" width="1" height="1" fill="#c2c2ca"/><rect x="9" y="5" width="2" height="1" fill="#fcfce0"/><rect x="11" y="5" width="1" height="1" fill="#d9d9de"/><rect x="12" y="5" width="1" height="1" fill="#000000"/><rect x="0" y="6" width="1" height="1" fill="#8c8c8c"/><rect x="1" y="6" width="1" height="1" fill="#fcfce0"/><rect x="2" y="6" width="3" height="1" fill="#c2c2ca"/><rect x="5" y="6" width="1" height="1" fill="#fcfce0"/><rect x="6" y="6" width="3" height="1" fill="#c2c2ca"/><rect x="9" y="6" width="2" height="1" fill="#fcfce0"/><rect x="11" y="6" width="1" height="1" fill="#d9d9de"/><rect x="12" y="6" width="1" height="1" fill="#000000"/><rect x="0" y="7" width="1" height="1" fill="#8c8c8c"/><rect x="1" y="7" width="10" height="1" fill="#fcfce0"/><rect x="11" y="7" width="1" height="1" fill="#d9d9de"/><rect x="12" y="7" width="1" height="1" fill="#000000"/><rect x="0" y="8" width="1" height="1" fill="#8c8c8c"/><rect x="1" y="8" width="1" height="1" fill="#fcfce0"/><rect x="2" y="8" width="8" height="1" fill="#c2c2ca"/><rect x="10" y="8" width="1" height="1" fill="#fcfce0"/><rect x="11" y="8" width="1" height="1" fill="#d9d9de"/><rect x="12" y="8" width="1" height="1" fill="#000000"/><rect x="0" y="9" width="1" height="1" fill="#8c8c8c"/><rect x="1" y="9" width="10" height="1" fill="#fcfce0"/><rect x="11" y="9" width="1" height="1" fill="#d9d9de"/><rect x="12" y="9" width="1" height="1" fill="#000000"/><rect x="0" y="10" width="1" height="1" fill="#8c8c8c"/><rect x="1" y="10" width="1" height="1" fill="#fcfce0"/><rect x="2" y="10" width="8" height="1" fill="#c2c2ca"/><rect x="10" y="10" width="1" height="1" fill="#fcfce0"/><rect x="11" y="10" width="1" height="1" fill="#d9d9de"/><rect x="12" y="10" width="1" height="1" fill="#000000"/><rect x="0" y="11" width="1" height="1" fill="#8c8c8c"/><rect x="1" y="11" width="10" height="1" fill="#fcfce0"/><rect x="11" y="11" width="1" height="1" fill="#d9d9de"/><rect x="12" y="11" width="1" height="1" fill="#000000"/><rect x="0" y="12" width="1" height="1" fill="#8c8c8c"/><rect x="1" y="12" width="5" height="1" fill="#fcfce0"/><rect x="6" y="12" width="4" height="1" fill="#c2c2ca"/><rect x="10" y="12" width="1" height="1" fill="#fcfce0"/><rect x="11" y="12" width="1" height="1" fill="#d9d9de"/><rect x="12" y="12" width="1" height="1" fill="#000000"/><rect x="0" y="13" width="1" height="1" fill="#8c8c8c"/><rect x="1" y="13" width="10" height="1" fill="#fcfce0"/><rect x="11" y="13" width="1" height="1" fill="#d9d9de"/><rect x="12" y="13" width="1" height="1" fill="#000000"/><rect x="0" y="14" width="1" height="1" fill="#8c8c8c"/><rect x="1" y="14" width="11" height="1" fill="#d9d9de"/><rect x="12" y="14" width="1" height="1" fill="#000000"/><rect x="0" y="15" width="1" height="1" fill="#8c8c8c"/><rect x="1" y="15" width="12" height="1" fill="#000000"/></svg>
<div class="t sy" style="left:44px;top:572px;font:13px 'Liberation Sans';color:#170a6a">Events</div>
<div class="a" style="left:15px;top:596px;width:12px;height:1px;background:repeating-linear-gradient(90deg,#7a7a7a 0 1px,transparent 1px 2px)"></div>
<svg class="a" style="left:27px;top:588px" width="13" height="16" shape-rendering="crispEdges"><rect x="0" y="0" width="10" height="1" fill="#8c8c8c"/><rect x="0" y="1" width="1" height="1" fill="#8c8c8c"/><rect x="1" y="1" width="8" height="1" fill="#fcfce0"/><rect x="9" y="1" width="1" height="1" fill="#8c8c8c"/><rect x="10" y="1" width="1" height="1" fill="#000000"/><rect x="0" y="2" width="1" height="1" fill="#8c8c8c"/><rect x="1" y="2" width="1" height="1" fill="#fcfce0"/><rect x="2" y="2" width="3" height="1" fill="#c2c2ca"/><rect x="5" y="2" width="1" height="1" fill="#fcfce0"/><rect x="6" y="2" width="2" height="1" fill="#c2c2ca"/><rect x="8" y="2" width="1" height="1" fill="#fcfce0"/><rect x="9" y="2" width="1" height="1" fill="#8c8c8c"/><rect x="10" y="2" width="1" height="1" fill="#fcfce0"/><rect x="11" y="2" width="1" height="1" fill="#000000"/><rect x="0" y="3" width="1" height="1" fill="#8c8c8c"/><rect x="1" y="3" width="5" height="1" fill="#fcfce0"/><rect x="6" y="3" width="1" height="1" fill="#c2c2ca"/><rect x="7" y="3" width="2" height="1" fill="#fcfce0"/><rect x="9" y="3" width="4" height="1" fill="#000000"/><rect x="0" y="4" width="1" height="1" fill="#8c8c8c"/><rect x="1" y="4" width="1" height="1" fill="#fcfce0"/><rect x="2" y="4" width="3" height="1" fill="#c2c2ca"/><rect x="5" y="4" width="1" height="1" fill="#fcfce0"/><rect x="6" y="4" width="1" height="1" fill="#c2c2ca"/><rect x="7" y="4" width="1" height="1" fill="#fcfce0"/><rect x="8" y="4" width="1" height="1" fill="#c2c2ca"/><rect x="9" y="4" width="2" height="1" fill="#fcfce0"/><rect x="11" y="4" width="1" height="1" fill="#d9d9de"/><rect x="12" y="4" width="1" height="1" fill="#000000"/><rect x="0" y="5" width="1" height="1" fill="#8c8c8c"/><rect x="1" y="5" width="5" height="1" fill="#fcfce0"/><rect x="6" y="5" width="1" height="1" fill="#c2c2ca"/><rect x="7" y="5" width="1" height="1" fill="#fcfce0"/><rect x="8" y="5" width="1" height="1" fill="#c2c2ca"/><rect x="9" y="5" width="2" height="1" fill="#fcfce0"/><rect x="11" y="5" width="1" height="1" fill="#d9d9de"/><rect x="12" y="5" width="1" height="1" fill="#000000"/><rect x="0" y="6" width="1" height="1" fill="#8c8c8c"/><rect x="1" y="6" width="1" height="1" fill="#fcfce0"/><rect x="2" y="6" width="3" height="1" fill="#c2c2ca"/><rect x="5" y="6" width="1" height="1" fill="#fcfce0"/><rect x="6" y="6" width="3" height="1" fill="#c2c2ca"/><rect x="9" y="6" width="2" height="1" fill="#fcfce0"/><rect x="11" y="6" width="1" height="1" fill="#d9d9de"/><rect x="12" y="6" width="1" height="1" fill="#000000"/><rect x="0" y="7" width="1" height="1" fill="#8c8c8c"/><rect x="1" y="7" width="10" height="1" fill="#fcfce0"/><rect x="11" y="7" width="1" height="1" fill="#d9d9de"/><rect x="12" y="7" width="1" height="1" fill="#000000"/><rect x="0" y="8" width="1" height="1" fill="#8c8c8c"/><rect x="1" y="8" width="1" height="1" fill="#fcfce0"/><rect x="2" y="8" width="8" height="1" fill="#c2c2ca"/><rect x="10" y="8" width="1" height="1" fill="#fcfce0"/><rect x="11" y="8" width="1" height="1" fill="#d9d9de"/><rect x="12" y="8" width="1" height="1" fill="#000000"/><rect x="0" y="9" width="1" height="1" fill="#8c8c8c"/><rect x="1" y="9" width="10" height="1" fill="#fcfce0"/><rect x="11" y="9" width="1" height="1" fill="#d9d9de"/><rect x="12" y="9" width="1" height="1" fill="#000000"/><rect x="0" y="10" width="1" height="1" fill="#8c8c8c"/><rect x="1" y="10" width="1" height="1" fill="#fcfce0"/><rect x="2" y="10" width="8" height="1" fill="#c2c2ca"/><rect x="10" y="10" width="1" height="1" fill="#fcfce0"/><rect x="11" y="10" width="1" height="1" fill="#d9d9de"/><rect x="12" y="10" width="1" height="1" fill="#000000"/><rect x="0" y="11" width="1" height="1" fill="#8c8c8c"/><rect x="1" y="11" width="10" height="1" fill="#fcfce0"/><rect x="11" y="11" width="1" height="1" fill="#d9d9de"/><rect x="12" y="11" width="1" height="1" fill="#000000"/><rect x="0" y="12" width="1" height="1" fill="#8c8c8c"/><rect x="1" y="12" width="5" height="1" fill="#fcfce0"/><rect x="6" y="12" width="4" height="1" fill="#c2c2ca"/><rect x="10" y="12" width="1" height="1" fill="#fcfce0"/><rect x="11" y="12" width="1" height="1" fill="#d9d9de"/><rect x="12" y="12" width="1" height="1" fill="#000000"/><rect x="0" y="13" width="1" height="1" fill="#8c8c8c"/><rect x="1" y="13" width="10" height="1" fill="#fcfce0"/><rect x="11" y="13" width="1" height="1" fill="#d9d9de"/><rect x="12" y="13" width="1" height="1" fill="#000000"/><rect x="0" y="14" width="1" height="1" fill="#8c8c8c"/><rect x="1" y="14" width="11" height="1" fill="#d9d9de"/><rect x="12" y="14" width="1" height="1" fill="#000000"/><rect x="0" y="15" width="1" height="1" fill="#8c8c8c"/><rect x="1" y="15" width="12" height="1" fill="#000000"/></svg>
<div class="t sy" style="left:44px;top:590px;font:13px 'Liberation Sans';color:#170a6a">My settings</div>
<div class="a" style="left:15px;top:614px;width:12px;height:1px;background:repeating-linear-gradient(90deg,#7a7a7a 0 1px,transparent 1px 2px)"></div>
<svg class="a" style="left:27px;top:606px" width="13" height="16" shape-rendering="crispEdges"><rect x="0" y="0" width="10" height="1" fill="#8c8c8c"/><rect x="0" y="1" width="1" height="1" fill="#8c8c8c"/><rect x="1" y="1" width="8" height="1" fill="#fcfce0"/><rect x="9" y="1" width="1" height="1" fill="#8c8c8c"/><rect x="10" y="1" width="1" height="1" fill="#000000"/><rect x="0" y="2" width="1" height="1" fill="#8c8c8c"/><rect x="1" y="2" width="1" height="1" fill="#fcfce0"/><rect x="2" y="2" width="3" height="1" fill="#c2c2ca"/><rect x="5" y="2" width="1" height="1" fill="#fcfce0"/><rect x="6" y="2" width="2" height="1" fill="#c2c2ca"/><rect x="8" y="2" width="1" height="1" fill="#fcfce0"/><rect x="9" y="2" width="1" height="1" fill="#8c8c8c"/><rect x="10" y="2" width="1" height="1" fill="#fcfce0"/><rect x="11" y="2" width="1" height="1" fill="#000000"/><rect x="0" y="3" width="1" height="1" fill="#8c8c8c"/><rect x="1" y="3" width="5" height="1" fill="#fcfce0"/><rect x="6" y="3" width="1" height="1" fill="#c2c2ca"/><rect x="7" y="3" width="2" height="1" fill="#fcfce0"/><rect x="9" y="3" width="4" height="1" fill="#000000"/><rect x="0" y="4" width="1" height="1" fill="#8c8c8c"/><rect x="1" y="4" width="1" height="1" fill="#fcfce0"/><rect x="2" y="4" width="3" height="1" fill="#c2c2ca"/><rect x="5" y="4" width="1" height="1" fill="#fcfce0"/><rect x="6" y="4" width="1" height="1" fill="#c2c2ca"/><rect x="7" y="4" width="1" height="1" fill="#fcfce0"/><rect x="8" y="4" width="1" height="1" fill="#c2c2ca"/><rect x="9" y="4" width="2" height="1" fill="#fcfce0"/><rect x="11" y="4" width="1" height="1" fill="#d9d9de"/><rect x="12" y="4" width="1" height="1" fill="#000000"/><rect x="0" y="5" width="1" height="1" fill="#8c8c8c"/><rect x="1" y="5" width="5" height="1" fill="#fcfce0"/><rect x="6" y="5" width="1" height="1" fill="#c2c2ca"/><rect x="7" y="5" width="1" height="1" fill="#fcfce0"/><rect x="8" y="5" width="1" height="1" fill="#c2c2ca"/><rect x="9" y="5" width="2" height="1" fill="#fcfce0"/><rect x="11" y="5" width="1" height="1" fill="#d9d9de"/><rect x="12" y="5" width="1" height="1" fill="#000000"/><rect x="0" y="6" width="1" height="1" fill="#8c8c8c"/><rect x="1" y="6" width="1" height="1" fill="#fcfce0"/><rect x="2" y="6" width="3" height="1" fill="#c2c2ca"/><rect x="5" y="6" width="1" height="1" fill="#fcfce0"/><rect x="6" y="6" width="3" height="1" fill="#c2c2ca"/><rect x="9" y="6" width="2" height="1" fill="#fcfce0"/><rect x="11" y="6" width="1" height="1" fill="#d9d9de"/><rect x="12" y="6" width="1" height="1" fill="#000000"/><rect x="0" y="7" width="1" height="1" fill="#8c8c8c"/><rect x="1" y="7" width="10" height="1" fill="#fcfce0"/><rect x="11" y="7" width="1" height="1" fill="#d9d9de"/><rect x="12" y="7" width="1" height="1" fill="#000000"/><rect x="0" y="8" width="1" height="1" fill="#8c8c8c"/><rect x="1" y="8" width="1" height="1" fill="#fcfce0"/><rect x="2" y="8" width="8" height="1" fill="#c2c2ca"/><rect x="10" y="8" width="1" height="1" fill="#fcfce0"/><rect x="11" y="8" width="1" height="1" fill="#d9d9de"/><rect x="12" y="8" width="1" height="1" fill="#000000"/><rect x="0" y="9" width="1" height="1" fill="#8c8c8c"/><rect x="1" y="9" width="10" height="1" fill="#fcfce0"/><rect x="11" y="9" width="1" height="1" fill="#d9d9de"/><rect x="12" y="9" width="1" height="1" fill="#000000"/><rect x="0" y="10" width="1" height="1" fill="#8c8c8c"/><rect x="1" y="10" width="1" height="1" fill="#fcfce0"/><rect x="2" y="10" width="8" height="1" fill="#c2c2ca"/><rect x="10" y="10" width="1" height="1" fill="#fcfce0"/><rect x="11" y="10" width="1" height="1" fill="#d9d9de"/><rect x="12" y="10" width="1" height="1" fill="#000000"/><rect x="0" y="11" width="1" height="1" fill="#8c8c8c"/><rect x="1" y="11" width="10" height="1" fill="#fcfce0"/><rect x="11" y="11" width="1" height="1" fill="#d9d9de"/><rect x="12" y="11" width="1" height="1" fill="#000000"/><rect x="0" y="12" width="1" height="1" fill="#8c8c8c"/><rect x="1" y="12" width="5" height="1" fill="#fcfce0"/><rect x="6" y="12" width="4" height="1" fill="#c2c2ca"/><rect x="10" y="12" width="1" height="1" fill="#fcfce0"/><rect x="11" y="12" width="1" height="1" fill="#d9d9de"/><rect x="12" y="12" width="1" height="1" fill="#000000"/><rect x="0" y="13" width="1" height="1" fill="#8c8c8c"/><rect x="1" y="13" width="10" height="1" fill="#fcfce0"/><rect x="11" y="13" width="1" height="1" fill="#d9d9de"/><rect x="12" y="13" width="1" height="1" fill="#000000"/><rect x="0" y="14" width="1" height="1" fill="#8c8c8c"/><rect x="1" y="14" width="11" height="1" fill="#d9d9de"/><rect x="12" y="14" width="1" height="1" fill="#000000"/><rect x="0" y="15" width="1" height="1" fill="#8c8c8c"/><rect x="1" y="15" width="12" height="1" fill="#000000"/></svg>
<div class="t sy" style="left:44px;top:608px;font:13px 'Liberation Sans';color:#170a6a">Logout</div>
<div class="t" style="left:87px;top:634.5px;font:13px 'Liberation Sans';color:#8c8c8c">New menu</div>
<div class="a" style="left:260px;top:177px;width:734px;height:278px;border:1px solid #8199d8;background:#fff"></div>
<div class="a" style="left:260px;top:177px;width:734px;height:27px;background:#8299d5"></div>
<div class="t" style="right:37.5px;top:183.5px;font:bold 13px 'Liberation Sans';letter-spacing:1.15px;color:#fff;-webkit-text-stroke:0.2px #fff">Show Messages</div>
<div class="t" style="left:271px;top:226px;font:bold 13.6px 'Liberation Sans';color:#000">Status der Flugzeuge</div>
<div class="t" style="left:426px;top:228px;font:11px 'Liberation Sans';letter-spacing:1.0px;color:#606060">(31.01.2014 07:12)</div>
<div class="a" style="left:271px;top:255px;width:619px;height:157px;border:1px solid #777;background:#f5f6e7"></div>
<div class="a" style="left:272px;top:256px;width:617px;height:22px;background:#f3f3f3"></div>
<div class="t" style="left:282px;top:261px;font:bold 10.6px 'Liberation Sans';letter-spacing:0.6px;color:#6c3c0e">Maschine</div>
<div class="t" style="left:358px;top:261px;font:bold 10.6px 'Liberation Sans';letter-spacing:0.6px;color:#6c3c0e">Status</div>
<div class="t" style="left:418px;top:261px;font:bold 10.6px 'Liberation Sans';letter-spacing:0.6px;color:#6c3c0e">Reststd.</div>
<div class="t" style="left:486px;top:261px;font:bold 10.6px 'Liberation Sans';letter-spacing:0.6px;color:#6c3c0e">Kontrolle</div>
<div class="t" style="left:558px;top:261px;font:bold 10.6px 'Liberation Sans';letter-spacing:0.6px;color:#6c3c0e">Standort</div>
<div class="t" style="left:628px;top:261px;font:bold 10.6px 'Liberation Sans';letter-spacing:0.6px;color:#6c3c0e">Bemerkungen</div>
<div class="t" style="left:814px;top:261px;font:bold 10.6px 'Liberation Sans';letter-spacing:0.6px;color:#6c3c0e">Aktualisiert</div>
<div class="a" style="left:273px;top:278px;width:616px;height:1px;background:repeating-linear-gradient(90deg,#6a3808 0 1px,transparent 1px 2px)"></div>
<div class="t sy" style="left:282px;top:281px;font:13px 'Liberation Sans';color:#111">HB-CQW</div>
<div class="t sy" style="left:358px;top:281px;font:13px 'Liberation Sans';color:#1f7d14">Klar</div>
<div class="t sy" style="right:485.5px;top:281px;font:13px 'Liberation Sans';letter-spacing:-0.3px;color:#111">100</div>
<div class="t sy" style="left:558px;top:281px;font:13px 'Liberation Sans';color:#111">LSZN</div>
<div class="t sy" style="left:628px;top:281px;font:13px 'Liberation Sans';letter-spacing:-0.05px;color:#111">next Maintenance bei 1680h</div>
<div class="t sy" style="left:814px;top:281px;font:13px 'Liberation Sans';letter-spacing:-0.5px;color:#111">14.01 10:56</div>
<div class="a" style="left:273px;top:297px;width:616px;height:1px;background:repeating-linear-gradient(90deg,#6a3808 0 1px,transparent 1px 2px)"></div>
<div class="t sy" style="left:282px;top:300px;font:13px 'Liberation Sans';color:#111">HB-POD</div>
<div class="t sy" style="left:358px;top:300px;font:13px 'Liberation Sans';color:#1f7d14">Klar</div>
<div class="t sy" style="right:485.5px;top:300px;font:13px 'Liberation Sans';letter-spacing:-0.3px;color:#111">50</div>
<div class="t sy" style="left:558px;top:300px;font:13px 'Liberation Sans';color:#111">LSZN</div>
<div class="t sy" style="left:628px;top:300px;font:13px 'Liberation Sans';letter-spacing:-0.05px;color:#111">KO bei 4330h</div>
<div class="t sy" style="left:814px;top:300px;font:13px 'Liberation Sans';letter-spacing:-0.5px;color:#111">12.12 14:57</div>
<div class="a" style="left:273px;top:316px;width:616px;height:1px;background:repeating-linear-gradient(90deg,#6a3808 0 1px,transparent 1px 2px)"></div>
<div class="t sy" style="left:282px;top:319px;font:13px 'Liberation Sans';color:#111">HB-POX</div>
<div class="t sy" style="left:358px;top:319px;font:13px 'Liberation Sans';color:#1f7d14">Klar</div>
<div class="t sy" style="right:485.5px;top:319px;font:13px 'Liberation Sans';letter-spacing:-0.3px;color:#111">50</div>
<div class="t sy" style="left:558px;top:319px;font:13px 'Liberation Sans';color:#111">LSZN</div>
<div class="t sy" style="left:628px;top:319px;font:13px 'Liberation Sans';letter-spacing:-0.05px;color:#111">KO bei 6050h</div>
<div class="t sy" style="left:814px;top:319px;font:13px 'Liberation Sans';letter-spacing:-0.5px;color:#111">31.01 07:12</div>
<div class="a" style="left:273px;top:335px;width:616px;height:1px;background:repeating-linear-gradient(90deg,#6a3808 0 1px,transparent 1px 2px)"></div>
<div class="t sy" style="left:282px;top:338px;font:13px 'Liberation Sans';color:#111">HB-PLW</div>
<div class="t sy" style="left:358px;top:338px;font:13px 'Liberation Sans';color:#1f7d14">Klar</div>
<div class="t sy" style="right:485.5px;top:338px;font:13px 'Liberation Sans';letter-spacing:-0.3px;color:#111">100</div>
<div class="t sy" style="left:558px;top:338px;font:13px 'Liberation Sans';color:#111">LSZN</div>
<div class="t sy" style="left:628px;top:338px;font:13px 'Liberation Sans';letter-spacing:-0.05px;color:#111">next Maintenance bei 6800h</div>
<div class="t sy" style="left:814px;top:338px;font:13px 'Liberation Sans';letter-spacing:-0.5px;color:#111">14.01 11:15</div>
<div class="a" style="left:273px;top:354px;width:616px;height:1px;background:repeating-linear-gradient(90deg,#6a3808 0 1px,transparent 1px 2px)"></div>
<div class="t sy" style="left:282px;top:357px;font:13px 'Liberation Sans';color:#111">HB-SFS</div>
<div class="t sy" style="left:358px;top:357px;font:13px 'Liberation Sans';color:#1f7d14">Klar</div>
<div class="t sy" style="right:485.5px;top:357px;font:13px 'Liberation Sans';letter-spacing:-0.3px;color:#111">100</div>
<div class="t sy" style="left:558px;top:357px;font:13px 'Liberation Sans';color:#111">LSZN</div>
<div class="t sy" style="left:628px;top:357px;font:13px 'Liberation Sans';letter-spacing:-0.05px;color:#111">next Maintenance bei 3400h</div>
<div class="t sy" style="left:814px;top:357px;font:13px 'Liberation Sans';letter-spacing:-0.5px;color:#111">16.01 13:41</div>
<div class="a" style="left:273px;top:373px;width:616px;height:1px;background:repeating-linear-gradient(90deg,#6a3808 0 1px,transparent 1px 2px)"></div>
<div class="t sy" style="left:282px;top:376px;font:13px 'Liberation Sans';color:#111">HB-SFU</div>
<div class="t sy" style="left:358px;top:376px;font:13px 'Liberation Sans';color:#1f7d14">Klar</div>
<div class="t sy" style="right:485.5px;top:376px;font:13px 'Liberation Sans';letter-spacing:-0.3px;color:#111">100</div>
<div class="t sy" style="left:558px;top:376px;font:13px 'Liberation Sans';color:#111">LSZN</div>
<div class="t sy" style="left:628px;top:376px;font:13px 'Liberation Sans';letter-spacing:-0.05px;color:#111">KO bei 2507h</div>
<div class="t sy" style="left:814px;top:376px;font:13px 'Liberation Sans';letter-spacing:-0.5px;color:#111">23.01 13:28</div>
<div class="a" style="left:273px;top:392px;width:616px;height:1px;background:repeating-linear-gradient(90deg,#6a3808 0 1px,transparent 1px 2px)"></div>
<div class="t sy" style="left:282px;top:395px;font:13px 'Liberation Sans';color:#111">HB-CEO</div>
<div class="t sy" style="left:358px;top:395px;font:13px 'Liberation Sans';color:#ee0a2e">Unklar</div>
<div class="t sy" style="right:485.5px;top:395px;font:13px 'Liberation Sans';letter-spacing:-0.3px;color:#111">100</div>
<div class="t sy" style="left:558px;top:395px;font:13px 'Liberation Sans';color:#111">LSZN</div>
<div class="t sy" style="left:628px;top:395px;font:13px 'Liberation Sans';letter-spacing:-0.05px;color:#111">KO bei 3735h</div>
<div class="t sy" style="left:814px;top:395px;font:13px 'Liberation Sans';letter-spacing:-0.5px;color:#111">28.12 10:56</div>
<div class="a" style="left:347px;top:278px;width:1px;height:133px;background:#777"></div>
<div class="a" style="left:407px;top:278px;width:1px;height:133px;background:#777"></div>
<div class="a" style="left:475px;top:278px;width:1px;height:133px;background:#777"></div>
<div class="a" style="left:547px;top:278px;width:1px;height:133px;background:#777"></div>
<div class="a" style="left:617px;top:278px;width:1px;height:133px;background:#777"></div>
<div class="a" style="left:803px;top:278px;width:1px;height:133px;background:#777"></div>
<div class="t" style="left:271px;top:412.5px;font:10.5px 'Liberation Sans';letter-spacing:1.0px;color:#7e7c78">(Joerg Cantieni)</div>
<div class="a" style="left:271px;top:436px;width:712px;height:1px;background:#9a9a9a"></div>
<div class="a" style="left:271px;top:437px;width:712px;height:1px;background:#eeeeee"></div>
<div class="a" style="left:8px;top:903px;width:334px;height:21px;background:#dedede;border-top:1px solid #d2d2d2;border-right:1px solid #d2d2d2;border-top-right-radius:4px"></div>
<div class="t" style="left:11.5px;top:907.5px;font:12px 'Liberation Sans';color:#545454">app.resi.de/rmf/app/ResNachDatum</div>
</body></html>
